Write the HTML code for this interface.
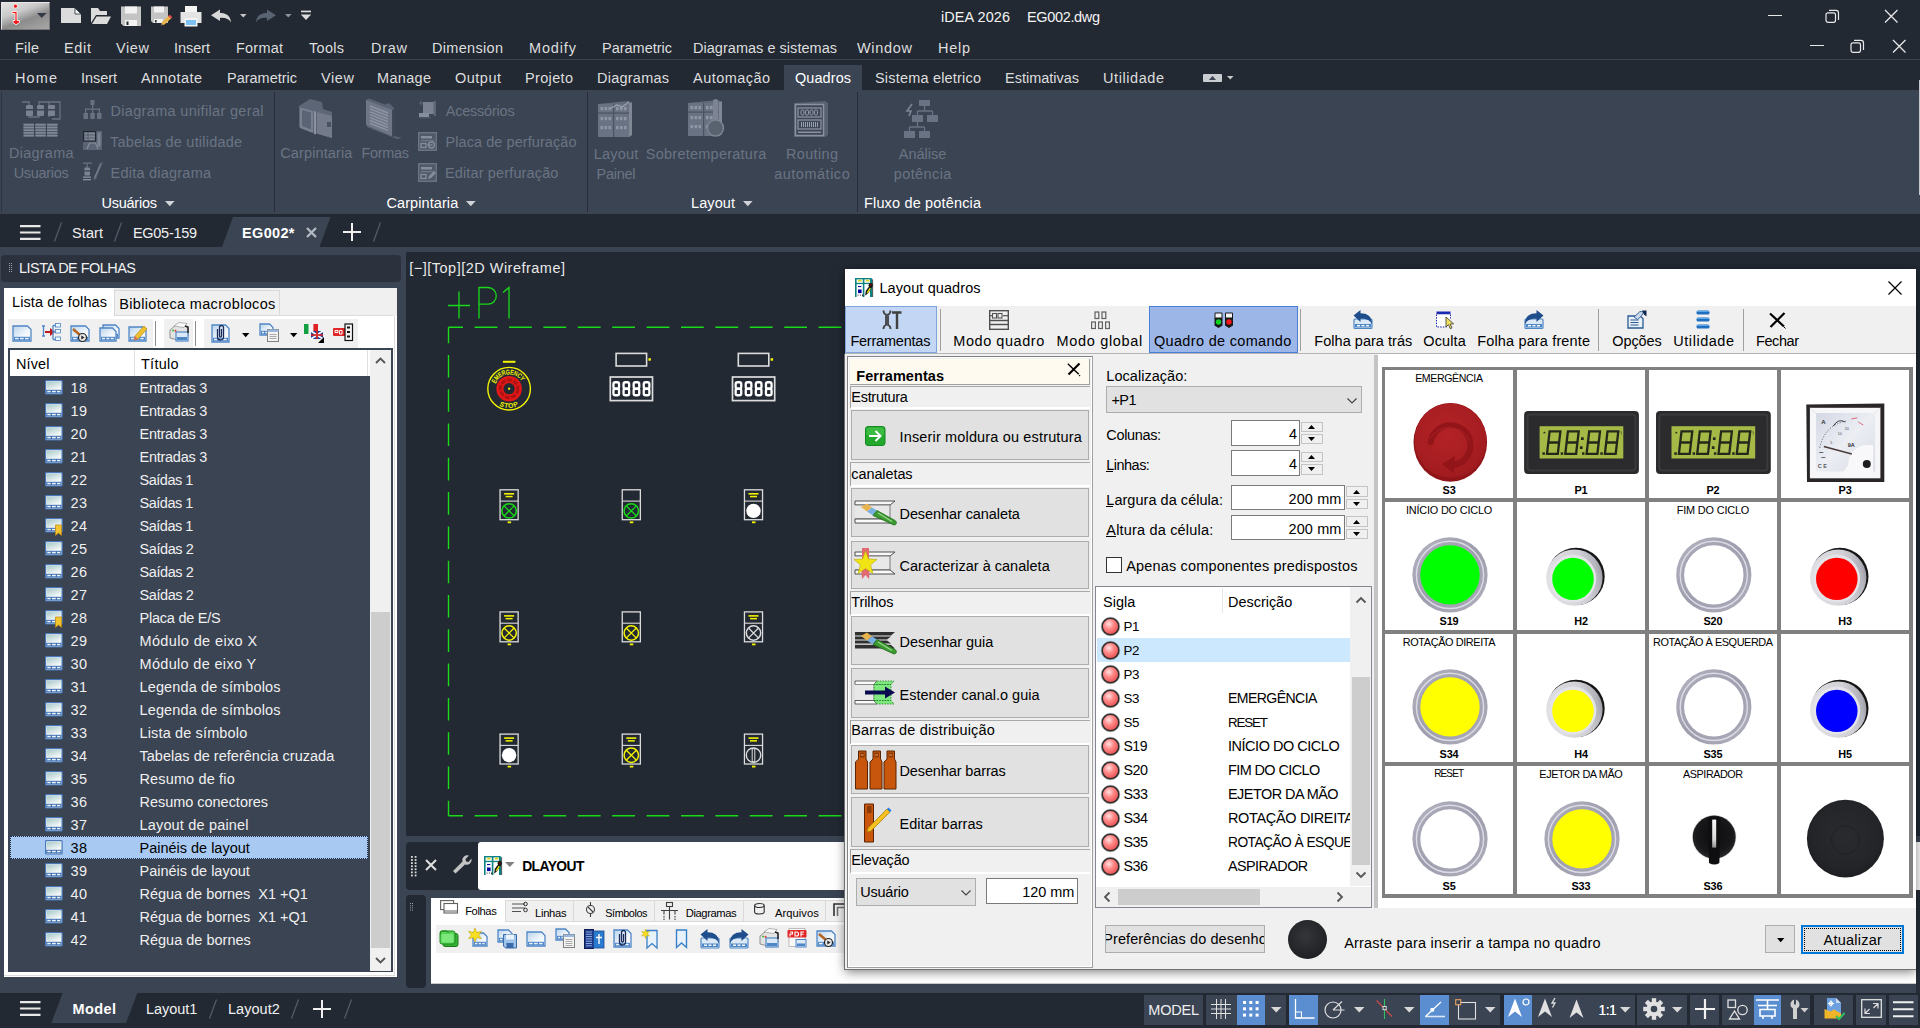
<!DOCTYPE html>
<html><head><meta charset="utf-8"><title>iDEA 2026 - EG002.dwg</title><style>html,body{margin:0;padding:0;}
body{width:1920px;height:1028px;overflow:hidden;background:#222933;position:relative;font-family:"Liberation Sans",sans-serif;}
.t{position:absolute;white-space:pre;margin:0;padding:0;}
.b{position:absolute;box-sizing:border-box;}
svg{overflow:visible;display:block;}
</style></head><body>
<div class="b" style="left:1px;top:2px;width:49px;height:28px;background:linear-gradient(160deg,#e4e4e4 0%,#c8c8c8 35%,#8c8c8c 60%,#a8a8a8 100%);border:1px solid #e8e8e8;border-right-color:#777;border-bottom-color:#777;box-sizing:border-box;"></div>
<svg class="b" style="left:8px;top:3px;" width="14" height="23" viewBox="0 0 14 23"><path d="M7.5 1.2a2 2 0 1 1 -0.1 0zM4 8.5h5v9h2.5v2l-3.5 2.3-3-2.3v-2h2v-7h-3z" fill="#f01818" stroke="#fff" stroke-width="0.8"/></svg>
<svg class="b" style="left:37px;top:13px;" width="10" height="6" viewBox="0 0 10 6"><path d="M0 0h9.5l-4.75 5z" fill="#333a46"/></svg>
<svg class="b" style="left:60px;top:7px;" width="22" height="17" viewBox="0 0 22 17"><path d="M1 1h14l6 6v9H1z" fill="#dcdcdc"/><path d="M15 1v6h6z" fill="#f4f4f4" stroke="#222933" stroke-width="0.8"/></svg>
<svg class="b" style="left:90px;top:7px;" width="22" height="18" viewBox="0 0 22 18"><path d="M1 16V1h7l2 3h7v4H6z" fill="#dcdcdc"/><path d="M6.5 9.5H21L17 17H2z" fill="#dcdcdc"/></svg>
<svg class="b" style="left:120px;top:6px;" width="22" height="21" viewBox="0 0 22 21"><path d="M1 0.5h20v19.5H3.5L1 17.5z" fill="#c4c4c4"/><rect x="5" y="0.5" width="12" height="7" fill="#f2f2f2"/><rect x="5" y="14" width="12" height="6" fill="#f2f2f2"/><rect x="6.5" y="15.5" width="2" height="3.5" fill="#222933"/></svg>
<svg class="b" style="left:150px;top:6px;" width="23" height="21" viewBox="0 0 23 21"><path d="M1 0.5h17v16.5H3L1 15z" fill="#c4c4c4"/><rect x="4" y="0.5" width="10" height="6" fill="#f2f2f2"/><rect x="4" y="13" width="9" height="4" fill="#f2f2f2"/><rect x="5" y="14" width="1.6" height="2.5" fill="#222933"/><path d="M11 19.5l1-3.5 7-6.5 2.5 2.5-7 6.5z" fill="#e8b54a"/><path d="M18.2 10.2l1.6-1.4 2.5 2.5-1.6 1.5z" fill="#e84c4c"/><path d="M11 19.5l0.6-2 1.4 1.4z" fill="#555"/></svg>
<svg class="b" style="left:180px;top:6px;" width="22" height="21" viewBox="0 0 22 21"><rect x="5" y="0" width="12" height="7" fill="#f4f4f4"/><path d="M0.5 6h21v11h-21z" fill="#e4e4e4"/><rect x="4.5" y="12" width="13" height="8.5" fill="#f4f4f4"/><rect x="6" y="14" width="10" height="5" fill="#7cc0f4"/></svg>
<svg class="b" style="left:210px;top:9px;" width="22" height="14" viewBox="0 0 22 14"><path d="M1 6.2L10 0.5v3.6c6 0 10.5 2.5 11 9.4c-2-3.6-5.5-5-11-4.6v3z" fill="#d8d8d8"/></svg>
<svg class="b" style="left:240px;top:14px;" width="7" height="4" viewBox="0 0 7 4"><path d="M0 0h6.6L3.3 3.6z" fill="#c8c8c8"/></svg>
<svg class="b" style="left:255px;top:9px;" width="22" height="14" viewBox="0 0 22 14"><path d="M21 6.2L12 0.5v3.6c-6 0-10.500 2.500-11 9.4c2-3.600 5.500-5 11-4.600v3z" fill="#596272"/></svg>
<svg class="b" style="left:285px;top:14px;" width="7" height="4" viewBox="0 0 7 4"><path d="M0 0h6.6L3.3 3.600z" fill="#8a93a0"/></svg>
<svg class="b" style="left:300px;top:10px;" width="12" height="11" viewBox="0 0 12 11"><rect x="1" y="0.6" width="10" height="1.700" fill="#dcdcdc"/><path d="M0.800 4.500h10.400L6 10z" fill="#dcdcdc"/></svg>
<div class="t" style="left:941.0px;top:6.8px;font-size:14.47px;line-height:21px;color:#f4f4f4;letter-spacing:0.078px;">iDEA 2026</div>
<div class="t" style="left:1027.0px;top:6.8px;font-size:14.47px;line-height:21px;color:#f4f4f4;letter-spacing:-0.327px;">EG002.dwg</div>
<div class="b" style="left:1768px;top:15px;width:14px;height:1.3px;background:#e8e8e8;"></div>
<svg class="b" style="left:1825px;top:9px;" width="15" height="15" viewBox="0 0 15 15"><rect x="1" y="3.800" width="9.500" height="9.500" rx="2" fill="none" stroke="#e8e8e8" stroke-width="1.200"/><path d="M4 1.400h7a2.500 2.500 0 0 1 2.500 2.500v7" fill="none" stroke="#e8e8e8" stroke-width="1.200"/></svg>
<svg class="b" style="left:1884px;top:9px;" width="15" height="15" viewBox="0 0 15 15"><path d="M1 1l12.500 12.500M13.500 1L1 13.500" stroke="#e8e8e8" stroke-width="1.300" fill="none"/></svg>
<div class="b" style="left:1810px;top:45px;width:14px;height:1.3px;background:#e8e8e8;"></div>
<svg class="b" style="left:1850px;top:39px;" width="15" height="15" viewBox="0 0 15 15"><rect x="1" y="3.800" width="9.500" height="9.500" rx="2" fill="none" stroke="#e8e8e8" stroke-width="1.200"/><path d="M4 1.400h7a2.500 2.500 0 0 1 2.500 2.500v7" fill="none" stroke="#e8e8e8" stroke-width="1.200"/></svg>
<svg class="b" style="left:1892px;top:39px;" width="15" height="15" viewBox="0 0 15 15"><path d="M1 1l12.500 12.500M13.500 1L1 13.500" stroke="#e8e8e8" stroke-width="1.300" fill="none"/></svg>
<div class="t" style="left:15.0px;top:37.8px;font-size:14.47px;line-height:21px;color:#dedede;letter-spacing:0.228px;">File</div>
<div class="t" style="left:64.0px;top:37.8px;font-size:14.47px;line-height:21px;color:#dedede;letter-spacing:0.689px;">Edit</div>
<div class="t" style="left:116.0px;top:37.8px;font-size:14.47px;line-height:21px;color:#dedede;letter-spacing:0.633px;">View</div>
<div class="t" style="left:174.0px;top:37.8px;font-size:14.47px;line-height:21px;color:#dedede;letter-spacing:-0.038px;">Insert</div>
<div class="t" style="left:236.0px;top:37.8px;font-size:14.47px;line-height:21px;color:#dedede;letter-spacing:0.235px;">Format</div>
<div class="t" style="left:309.0px;top:37.8px;font-size:14.47px;line-height:21px;color:#dedede;letter-spacing:0.305px;">Tools</div>
<div class="t" style="left:371.0px;top:37.8px;font-size:14.47px;line-height:21px;color:#dedede;letter-spacing:0.745px;">Draw</div>
<div class="t" style="left:432.0px;top:37.8px;font-size:14.47px;line-height:21px;color:#dedede;letter-spacing:0.330px;">Dimension</div>
<div class="t" style="left:529.0px;top:37.8px;font-size:14.47px;line-height:21px;color:#dedede;letter-spacing:0.876px;">Modify</div>
<div class="t" style="left:602.0px;top:37.8px;font-size:14.47px;line-height:21px;color:#dedede;letter-spacing:0.005px;">Parametric</div>
<div class="t" style="left:693.0px;top:37.8px;font-size:14.47px;line-height:21px;color:#dedede;letter-spacing:0.045px;">Diagramas e sistemas</div>
<div class="t" style="left:857.0px;top:37.8px;font-size:14.47px;line-height:21px;color:#dedede;letter-spacing:0.707px;">Window</div>
<div class="t" style="left:938.0px;top:37.8px;font-size:14.47px;line-height:21px;color:#dedede;letter-spacing:0.747px;">Help</div>
<div class="b" style="left:0px;top:59px;width:1920px;height:1px;background:#3b4453;"></div>
<div class="b" style="left:784px;top:65px;width:78px;height:25px;background:#3b4453;"></div>
<div class="t" style="left:15.0px;top:67.8px;font-size:14.47px;line-height:21px;color:#dedede;letter-spacing:1.134px;">Home</div>
<div class="t" style="left:81.0px;top:67.8px;font-size:14.47px;line-height:21px;color:#dedede;letter-spacing:-0.038px;">Insert</div>
<div class="t" style="left:141.0px;top:67.8px;font-size:14.47px;line-height:21px;color:#dedede;letter-spacing:0.439px;">Annotate</div>
<div class="t" style="left:227.0px;top:67.8px;font-size:14.47px;line-height:21px;color:#dedede;letter-spacing:0.005px;">Parametric</div>
<div class="t" style="left:321.0px;top:67.8px;font-size:14.47px;line-height:21px;color:#dedede;letter-spacing:0.633px;">View</div>
<div class="t" style="left:377.0px;top:67.8px;font-size:14.47px;line-height:21px;color:#dedede;letter-spacing:0.342px;">Manage</div>
<div class="t" style="left:455.0px;top:67.8px;font-size:14.47px;line-height:21px;color:#dedede;letter-spacing:0.512px;">Output</div>
<div class="t" style="left:525.0px;top:67.8px;font-size:14.47px;line-height:21px;color:#dedede;letter-spacing:0.359px;">Projeto</div>
<div class="t" style="left:597.0px;top:67.8px;font-size:14.47px;line-height:21px;color:#dedede;letter-spacing:0.255px;">Diagramas</div>
<div class="t" style="left:693.0px;top:67.8px;font-size:14.47px;line-height:21px;color:#dedede;letter-spacing:0.475px;">Automação</div>
<div class="t" style="left:795.0px;top:67.8px;font-size:14.47px;line-height:21px;color:#ffffff;letter-spacing:0.084px;">Quadros</div>
<div class="t" style="left:875.0px;top:67.8px;font-size:14.47px;line-height:21px;color:#dedede;letter-spacing:0.204px;">Sistema eletrico</div>
<div class="t" style="left:1005.0px;top:67.8px;font-size:14.47px;line-height:21px;color:#dedede;letter-spacing:0.002px;">Estimativas</div>
<div class="t" style="left:1103.0px;top:67.8px;font-size:14.47px;line-height:21px;color:#dedede;letter-spacing:0.587px;">Utilidade</div>
<div class="b" style="left:1203px;top:74px;width:19px;height:8px;background:#c9ccd1;border-radius:1px;"></div>
<svg class="b" style="left:1209px;top:76px;" width="7" height="4" viewBox="0 0 7 4"><path d="M0 4h7L3.500 0z" fill="#3b4453"/></svg>
<svg class="b" style="left:1227px;top:76px;" width="7" height="4" viewBox="0 0 7 4"><path d="M0 0h6.600L3.300 3.600z" fill="#c8c8c8"/></svg>
<div class="b" style="left:0px;top:90px;width:1920px;height:124px;background:#3b4453;"></div>
<div class="b" style="left:274px;top:92px;width:1px;height:120px;background:#272e39;"></div>
<div class="b" style="left:587px;top:92px;width:1px;height:120px;background:#272e39;"></div>
<div class="b" style="left:857px;top:92px;width:1px;height:120px;background:#272e39;"></div>
<div class="b" style="left:1px;top:92px;width:1px;height:120px;background:#2c3440;"></div>
<div class="b" style="left:1918.5px;top:80px;width:1.2px;height:115px;background:#c4c8ce;"></div>
<svg class="b" style="left:22px;top:100px;" width="39" height="38" viewBox="0 0 39 38"><g fill="none" stroke="#697181" stroke-width="1.3"><path d="M0 2h7v15h10V2h10v15M20 2h18v17h-8"/></g><rect x="4" y="5" width="7" height="11" rx="1.200" fill="#7a8291"/><rect x="4" y="9" width="7" height="1.500" fill="#3b4453"/><rect x="15" y="5" width="7" height="11" rx="1.200" fill="#7a8291"/><rect x="15" y="9" width="7" height="1.500" fill="#3b4453"/><rect x="26" y="5" width="7" height="11" rx="1.200" fill="#7a8291"/><rect x="26" y="9" width="7" height="1.500" fill="#3b4453"/><rect x="1.5" y="23" width="10.500" height="14" fill="#515a69"/><rect x="1.5" y="24.0" width="10.500" height="1.600" fill="#828a98"/><rect x="1.5" y="26.7" width="10.500" height="1.600" fill="#828a98"/><rect x="1.5" y="29.4" width="10.500" height="1.600" fill="#828a98"/><rect x="1.5" y="32.1" width="10.500" height="1.600" fill="#828a98"/><rect x="1.5" y="34.8" width="10.500" height="1.600" fill="#828a98"/><rect x="13.3" y="23" width="10.500" height="14" fill="#515a69"/><rect x="13.3" y="24.0" width="10.500" height="1.600" fill="#828a98"/><rect x="13.3" y="26.7" width="10.500" height="1.600" fill="#828a98"/><rect x="13.3" y="29.4" width="10.500" height="1.600" fill="#828a98"/><rect x="13.3" y="32.1" width="10.500" height="1.600" fill="#828a98"/><rect x="13.3" y="34.8" width="10.500" height="1.600" fill="#828a98"/><rect x="25.0" y="23" width="10.500" height="14" fill="#515a69"/><rect x="25.0" y="24.0" width="10.500" height="1.600" fill="#828a98"/><rect x="25.0" y="26.7" width="10.500" height="1.600" fill="#828a98"/><rect x="25.0" y="29.4" width="10.500" height="1.600" fill="#828a98"/><rect x="25.0" y="32.1" width="10.500" height="1.600" fill="#828a98"/><rect x="25.0" y="34.8" width="10.500" height="1.600" fill="#828a98"/></svg>
<div class="t" style="left:9.0px;top:143.3px;font-size:14.47px;line-height:21px;color:#6a7484;letter-spacing:0.253px;">Diagrama</div>
<div class="t" style="left:13.7px;top:162.8px;font-size:14.47px;line-height:21px;color:#6a7484;letter-spacing:-0.299px;">Usuarios</div>
<svg class="b" style="left:83px;top:100px;" width="19" height="20" viewBox="0 0 19 20"><g fill="#697181"><rect x="7.500" y="0" width="4" height="5"/><rect x="9" y="5" width="1.300" height="4"/><rect x="2" y="8.500" width="15" height="1.300"/><rect x="2" y="8.500" width="1.300" height="5"/><rect x="9" y="8.500" width="1.300" height="5"/><rect x="15.700" y="8.500" width="1.300" height="5"/><rect x="0.500" y="13" width="4.500" height="6"/><rect x="7.300" y="13" width="4.500" height="6"/><rect x="14" y="13" width="4.500" height="6"/></g></svg>
<svg class="b" style="left:83px;top:131px;" width="20" height="20" viewBox="0 0 20 20"><rect x="0" y="0" width="19" height="19" fill="#5b6474"/><rect x="0.600" y="0.600" width="12" height="9.500" fill="#7d8594" stroke="#20262f" stroke-width="1.200"/><path d="M1 4h11M1 7h11M5 1v9" stroke="#4c5563" stroke-width="0.800"/><path d="M4 18l2.500-6h6l2.500 6" stroke="#868e9c" stroke-width="1.200" fill="none"/><rect x="14.500" y="1.500" width="3" height="14" fill="#7d8594"/></svg>
<svg class="b" style="left:83px;top:162px;" width="20" height="20" viewBox="0 0 20 20"><g fill="#697181"><rect x="0" y="0.500" width="9" height="1.300"/><rect x="3.500" y="1" width="1.300" height="5"/><rect x="1.500" y="5.500" width="5.500" height="8" rx="0.800" fill="#7d8594"/><rect x="1.500" y="8.300" width="5.500" height="1.300" fill="#3b4453"/><rect x="0" y="14.500" width="8" height="1.300" fill="#8a92a0"/><rect x="0" y="17" width="8" height="1.300" fill="#8a92a0"/></g><path d="M10 17.500l7.500-17h2.300l-7 17z" fill="#5c6575"/><path d="M11.500 16l6-14" stroke="#8a92a0" stroke-width="0.700"/></svg>
<div class="t" style="left:110.5px;top:100.8px;font-size:14.47px;line-height:21px;color:#6a7484;letter-spacing:0.338px;">Diagrama unifilar geral</div>
<div class="t" style="left:110.0px;top:132.3px;font-size:14.47px;line-height:21px;color:#6a7484;letter-spacing:0.215px;">Tabelas de utilidade</div>
<div class="t" style="left:110.5px;top:163.3px;font-size:14.47px;line-height:21px;color:#6a7484;letter-spacing:0.244px;">Edita diagrama</div>
<div class="t" style="left:101.5px;top:192.8px;font-size:14.47px;line-height:21px;color:#ffffff;letter-spacing:-0.228px;">Usuários</div>
<svg class="b" style="left:165px;top:201px;" width="10" height="6" viewBox="0 0 10 6"><path d="M0 0h9.600L4.800 5.200z" fill="#d0d3d8"/></svg>
<svg class="b" style="left:297px;top:98px;" width="38" height="41" viewBox="0 0 38 41"><path d="M2 8l11-7 12 3 1 7 9 3v26l-18-5-15-6z" fill="#5d6676"/><path d="M3 9.500l13 3.500v22l-13-5z" fill="#798190"/><path d="M5 12l9 2.500v17l-9-3.500z" fill="#5b6474"/><path d="M20 14l15 4v22l-15-4.500z" fill="#737b8a"/><path d="M17 13l2 0.500v23l-2-0.500z" fill="#8a92a0"/><rect x="30" y="24" width="4" height="5" fill="#4a5362"/></svg>
<svg class="b" style="left:365px;top:98px;" width="40" height="41" viewBox="0 0 40 41"><path d="M1 2l3-1.500 16 6 4-1.500 5 5v28l8 2-5 1-30-12z" fill="#5a6373"/><path d="M1 2l26 10v26l-26-11z" fill="#6f7787"/><path d="M27 12l3-1v27l-3 1z" fill="#3e4756"/><path d="M5 8.0l18 7" stroke="#8d95a3" stroke-width="1.400"/><path d="M5 10.9l18 7" stroke="#8d95a3" stroke-width="1.400"/><path d="M5 13.8l18 7" stroke="#8d95a3" stroke-width="1.400"/><path d="M5 16.7l18 7" stroke="#8d95a3" stroke-width="1.400"/><path d="M5 19.6l18 7" stroke="#8d95a3" stroke-width="1.400"/><path d="M5 22.5l18 7" stroke="#8d95a3" stroke-width="1.400"/><path d="M5 25.4l18 7" stroke="#8d95a3" stroke-width="1.400"/></svg>
<div class="t" style="left:280.3px;top:143.3px;font-size:14.47px;line-height:21px;color:#6a7484;letter-spacing:0.123px;">Carpintaria</div>
<div class="t" style="left:361.5px;top:143.3px;font-size:14.47px;line-height:21px;color:#6a7484;letter-spacing:-0.308px;">Formas</div>
<svg class="b" style="left:418px;top:100px;" width="19" height="20" viewBox="0 0 19 20"><rect x="5" y="2" width="11" height="12" fill="#7a8291"/><rect x="15.500" y="1" width="2.500" height="15" fill="#5d6676"/><rect x="1" y="13" width="10" height="4.500" fill="#868e9c"/><rect x="1" y="17" width="12" height="1.500" fill="#4c5563"/><path d="M3 1v4M1 3h4" stroke="#5d6676" stroke-width="1"/></svg>
<svg class="b" style="left:418px;top:132px;" width="19" height="19" viewBox="0 0 19 19"><rect x="0.700" y="0.700" width="17.600" height="17.600" fill="#515a69" stroke="#6f7787" stroke-width="1.300"/><rect x="3" y="4" width="11" height="2.500" fill="#868e9c"/><rect x="3" y="8" width="13" height="1.300" fill="#6f7787"/><rect x="3" y="11.500" width="5" height="4" fill="none" stroke="#868e9c" stroke-width="1.300"/><circle cx="13.500" cy="13" r="3" fill="none" stroke="#868e9c" stroke-width="1.300"/><path d="M9.500 13h5" stroke="#868e9c" stroke-width="1.300"/></svg>
<svg class="b" style="left:418px;top:163px;" width="19" height="19" viewBox="0 0 19 19"><rect x="0.700" y="0.700" width="17.600" height="17.600" fill="#515a69" stroke="#6f7787" stroke-width="1.300"/><rect x="3" y="4" width="11" height="2.500" fill="#868e9c"/><rect x="3" y="8" width="13" height="1.300" fill="#6f7787"/><rect x="3" y="11.500" width="5" height="4" fill="none" stroke="#868e9c" stroke-width="1.300"/><path d="M10 16l1-3 5-5 2 2-5 5z" fill="#868e9c"/></svg>
<div class="t" style="left:445.7px;top:100.8px;font-size:14.47px;line-height:21px;color:#6a7484;letter-spacing:-0.196px;">Acessórios</div>
<div class="t" style="left:445.5px;top:131.8px;font-size:14.47px;line-height:21px;color:#6a7484;letter-spacing:0.083px;">Placa de perfuração</div>
<div class="t" style="left:445.0px;top:163.3px;font-size:14.47px;line-height:21px;color:#6a7484;letter-spacing:0.150px;">Editar perfuração</div>
<div class="t" style="left:386.5px;top:192.8px;font-size:14.47px;line-height:21px;color:#ffffff;letter-spacing:0.093px;">Carpintaria</div>
<svg class="b" style="left:466px;top:201px;" width="10" height="6" viewBox="0 0 10 6"><path d="M0 0h9.600L4.800 5.200z" fill="#d0d3d8"/></svg>
<svg class="b" style="left:597px;top:100px;" width="37" height="39" viewBox="0 0 37 39"><path d="M1 4l30-3 4 2v32l-3 2H1z" fill="#626b7b"/><path d="M32 3l3-0.500v32.500l-3 2z" fill="#808896"/><rect x="1" y="4" width="31" height="33" fill="#6a7383"/><rect x="1" y="12.500" width="31" height="1.200" fill="#4a5362"/><rect x="16" y="4" width="1.200" height="33" fill="#4a5362"/><rect x="3.5" y="7" width="2.600" height="3.200" fill="#8f97a5"/><rect x="7.5" y="7" width="2.600" height="3.200" fill="#8f97a5"/><rect x="11.5" y="7" width="2.600" height="3.200" fill="#8f97a5"/><rect x="19.0" y="7" width="2.600" height="3.200" fill="#8f97a5"/><rect x="23.0" y="7" width="2.600" height="3.200" fill="#8f97a5"/><rect x="27.0" y="7" width="2.600" height="3.200" fill="#8f97a5"/><rect x="3.5" y="17" width="2.600" height="3.200" fill="#8f97a5"/><rect x="7.5" y="17" width="2.600" height="3.200" fill="#8f97a5"/><rect x="11.5" y="17" width="2.600" height="3.200" fill="#8f97a5"/><rect x="19.0" y="17" width="2.600" height="3.200" fill="#8f97a5"/><rect x="23.0" y="17" width="2.600" height="3.200" fill="#8f97a5"/><rect x="27.0" y="17" width="2.600" height="3.200" fill="#8f97a5"/><rect x="3.5" y="26" width="2.600" height="3.200" fill="#8f97a5"/><rect x="7.5" y="26" width="2.600" height="3.200" fill="#8f97a5"/><rect x="11.5" y="26" width="2.600" height="3.200" fill="#8f97a5"/><rect x="19.0" y="26" width="2.600" height="3.200" fill="#8f97a5"/><rect x="23.0" y="26" width="2.600" height="3.200" fill="#8f97a5"/><rect x="27.0" y="26" width="2.600" height="3.200" fill="#8f97a5"/><path d="M14 8l6-3 5 2 7-5" stroke="#9aa1ae" stroke-width="1.300" fill="none"/></svg>
<svg class="b" style="left:687px;top:99px;" width="41" height="40" viewBox="0 0 41 40"><path d="M1 4l30-3 4 2v32l-3 2H1z" fill="#626b7b"/><path d="M32 3l3-0.500v32.500l-3 2z" fill="#808896"/><rect x="1" y="4" width="31" height="33" fill="#6a7383"/><rect x="1" y="12.500" width="31" height="1.200" fill="#4a5362"/><rect x="16" y="4" width="1.200" height="33" fill="#4a5362"/><rect x="3.5" y="7" width="2.600" height="3.200" fill="#8f97a5"/><rect x="7.5" y="7" width="2.600" height="3.200" fill="#8f97a5"/><rect x="11.5" y="7" width="2.600" height="3.200" fill="#8f97a5"/><rect x="19.0" y="7" width="2.600" height="3.200" fill="#8f97a5"/><rect x="23.0" y="7" width="2.600" height="3.200" fill="#8f97a5"/><rect x="27.0" y="7" width="2.600" height="3.200" fill="#8f97a5"/><rect x="3.5" y="17" width="2.600" height="3.200" fill="#8f97a5"/><rect x="7.5" y="17" width="2.600" height="3.200" fill="#8f97a5"/><rect x="11.5" y="17" width="2.600" height="3.200" fill="#8f97a5"/><rect x="19.0" y="17" width="2.600" height="3.200" fill="#8f97a5"/><rect x="23.0" y="17" width="2.600" height="3.200" fill="#8f97a5"/><rect x="27.0" y="17" width="2.600" height="3.200" fill="#8f97a5"/><rect x="3.5" y="26" width="2.600" height="3.200" fill="#8f97a5"/><rect x="7.5" y="26" width="2.600" height="3.200" fill="#8f97a5"/><rect x="11.5" y="26" width="2.600" height="3.200" fill="#8f97a5"/><rect x="19.0" y="26" width="2.600" height="3.200" fill="#8f97a5"/><rect x="23.0" y="26" width="2.600" height="3.200" fill="#8f97a5"/><rect x="27.0" y="26" width="2.600" height="3.200" fill="#8f97a5"/><rect x="26" y="0" width="5" height="25" rx="2.500" fill="#7d8594"/><circle cx="28.500" cy="29" r="8" fill="#59626f"/><circle cx="28.500" cy="29" r="8" fill="none" stroke="#7d8594" stroke-width="1.500"/></svg>
<svg class="b" style="left:793px;top:100px;" width="37" height="39" viewBox="0 0 37 39"><path d="M1 3l31-2 3 2v32l-3 2H1z" fill="#596272"/><rect x="2.500" y="4.500" width="28" height="31" fill="#3e4756" stroke="#8a92a0" stroke-width="1.500"/><rect x="5" y="8" width="23" height="9" fill="none" stroke="#8a92a0" stroke-width="1.300"/><rect x="5" y="20" width="23" height="9" fill="none" stroke="#8a92a0" stroke-width="1.300"/><rect x="8.0" y="10" width="3" height="5" rx="1.300" fill="none" stroke="#9aa1ae" stroke-width="1"/><rect x="12.5" y="10" width="3" height="5" rx="1.300" fill="none" stroke="#9aa1ae" stroke-width="1"/><rect x="17.0" y="10" width="3" height="5" rx="1.300" fill="none" stroke="#9aa1ae" stroke-width="1"/><rect x="21.5" y="10" width="3" height="5" rx="1.300" fill="none" stroke="#9aa1ae" stroke-width="1"/><rect x="8" y="22" width="1" height="5" fill="#9aa1ae"/><rect x="10" y="22" width="1" height="5" fill="#9aa1ae"/><rect x="12" y="22" width="1" height="5" fill="#9aa1ae"/><rect x="14" y="22" width="1" height="5" fill="#9aa1ae"/><rect x="16" y="22" width="1" height="5" fill="#9aa1ae"/><rect x="18" y="22" width="1" height="5" fill="#9aa1ae"/><rect x="20" y="22" width="1" height="5" fill="#9aa1ae"/><rect x="22" y="22" width="1" height="5" fill="#9aa1ae"/><rect x="24" y="22" width="1" height="5" fill="#9aa1ae"/><rect x="5" y="31.500" width="23" height="1.500" fill="#8a92a0"/></svg>
<div class="t" style="left:593.8px;top:144.3px;font-size:14.47px;line-height:21px;color:#6a7484;letter-spacing:0.211px;">Layout</div>
<div class="t" style="left:596.5px;top:164.3px;font-size:14.47px;line-height:21px;color:#6a7484;letter-spacing:-0.245px;">Painel</div>
<div class="t" style="left:645.8px;top:144.3px;font-size:14.47px;line-height:21px;color:#6a7484;letter-spacing:0.258px;">Sobretemperatura</div>
<div class="t" style="left:786.0px;top:144.3px;font-size:14.47px;line-height:21px;color:#6a7484;letter-spacing:0.354px;">Routing</div>
<div class="t" style="left:774.2px;top:164.3px;font-size:14.47px;line-height:21px;color:#6a7484;letter-spacing:0.524px;">automático</div>
<div class="t" style="left:691.0px;top:192.8px;font-size:14.47px;line-height:21px;color:#ffffff;letter-spacing:0.111px;">Layout</div>
<svg class="b" style="left:743px;top:201px;" width="10" height="6" viewBox="0 0 10 6"><path d="M0 0h9.600L4.800 5.200z" fill="#d0d3d8"/></svg>
<svg class="b" style="left:904px;top:100px;" width="36" height="39" viewBox="0 0 36 39"><g fill="#6a7383"><rect x="15" y="0" width="11" height="6"/><rect x="8" y="15" width="11" height="7"/><rect x="23" y="15" width="11" height="7"/><rect x="0" y="31" width="11" height="7"/><rect x="15" y="31" width="11" height="7"/></g><path d="M20.500 6v5M13.500 11h15M13.500 11v4M28.500 11v4M13.500 22v5M5.500 27h15M5.500 27v4M20.500 27v4" stroke="#6a7383" stroke-width="1.300" fill="none"/><path d="M8 4l-5 7h4l-2 5" stroke="#7d8594" stroke-width="1.600" fill="none"/></svg>
<div class="t" style="left:898.8px;top:144.3px;font-size:14.47px;line-height:21px;color:#6a7484;letter-spacing:0.007px;">Análise</div>
<div class="t" style="left:893.8px;top:164.3px;font-size:14.47px;line-height:21px;color:#6a7484;letter-spacing:0.399px;">potência</div>
<div class="t" style="left:864.0px;top:192.8px;font-size:14.47px;line-height:21px;color:#ffffff;letter-spacing:0.173px;">Fluxo de potência</div>
<svg class="b" style="left:20px;top:225px;" width="21" height="15" viewBox="0 0 21 15"><path d="M0 1.200h20.500M0 7.500h20.500M0 13.800h20.500" stroke="#e8e8e8" stroke-width="2.200"/></svg>
<svg class="b" style="left:53px;top:222px;" width="10" height="20" viewBox="0 0 10 20"><path d="M8.500 0.500L1.500 19.5" stroke="#555e6d" stroke-width="1.200"/></svg>
<div class="t" style="left:72.0px;top:222.8px;font-size:14.47px;line-height:21px;color:#f0f0f0;letter-spacing:0.111px;">Start</div>
<svg class="b" style="left:113px;top:222px;" width="10" height="20" viewBox="0 0 10 20"><path d="M8.500 0.500L1.500 19.5" stroke="#555e6d" stroke-width="1.200"/></svg>
<div class="t" style="left:133.0px;top:222.8px;font-size:14.47px;line-height:21px;color:#f0f0f0;letter-spacing:-0.280px;">EG05-159</div>
<svg class="b" style="left:218px;top:217px;" width="116" height="30" viewBox="0 0 116 30"><path d="M4 30L15 0H112.500L101.500 30z" fill="#3b4453"/></svg>
<div class="t" style="left:242.0px;top:222.8px;font-size:14.47px;line-height:21px;color:#ffffff;letter-spacing:0.364px;font-weight:bold;">EG002*</div>
<svg class="b" style="left:306px;top:227px;" width="11" height="11" viewBox="0 0 11 11"><path d="M1 1l9 9M10 1l-9 9" stroke="#b4b9c2" stroke-width="2.300"/></svg>
<svg class="b" style="left:343px;top:223px;" width="18" height="18" viewBox="0 0 18 18"><path d="M9 0v18M0 9h18" stroke="#f0f0f0" stroke-width="2"/></svg>
<svg class="b" style="left:372px;top:222px;" width="10" height="20" viewBox="0 0 10 20"><path d="M8.500 0.500L1.500 19.5" stroke="#555e6d" stroke-width="1.200"/></svg>
<div class="b" style="left:0px;top:247px;width:1920px;height:5px;background:#3b4453;"></div>
<svg width="0" height="0" style="position:absolute"><defs><linearGradient id="shg" x1="0" y1="0" x2="0.700" y2="1"><stop offset="0" stop-color="#a8c8c8"/><stop offset="1" stop-color="#f4f8f8"/></linearGradient></defs></svg>
<div class="b" style="left:0px;top:247px;width:1920px;height:746px;background:#3b4453;"></div>
<div class="b" style="left:1px;top:255px;width:400px;height:27.2px;background:#2b323e;border-radius:4px;"></div>
<svg class="b" style="left:9px;top:263px;" width="3" height="10" viewBox="0 0 3 10"><rect x="0" y="0.0" width="1" height="1" fill="#9aa1ad"/><rect x="2" y="0.0" width="1" height="1" fill="#9aa1ad"/><rect x="0" y="2.0" width="1" height="1" fill="#9aa1ad"/><rect x="2" y="2.0" width="1" height="1" fill="#9aa1ad"/><rect x="0" y="4.0" width="1" height="1" fill="#9aa1ad"/><rect x="2" y="4.0" width="1" height="1" fill="#9aa1ad"/><rect x="0" y="6.0" width="1" height="1" fill="#9aa1ad"/><rect x="2" y="6.0" width="1" height="1" fill="#9aa1ad"/><rect x="0" y="8.0" width="1" height="1" fill="#9aa1ad"/><rect x="2" y="8.0" width="1" height="1" fill="#9aa1ad"/></svg>
<div class="t" style="left:19.0px;top:257.6px;font-size:14.47px;line-height:21px;color:#f0f0f0;letter-spacing:-0.527px;">LISTA DE FOLHAS</div>
<div class="b" style="left:4px;top:287.8px;width:393.2px;height:689.3px;background:#ffffff;"></div>
<div class="b" style="left:114px;top:287.8px;width:283.2px;height:28px;background:#f0f0f0;"></div>
<div class="b" style="left:394.2px;top:316px;width:1px;height:660px;background:#dcdcdc;"></div>
<div class="b" style="left:4px;top:975px;width:391px;height:1px;background:#dcdcdc;"></div>
<div class="b" style="left:114px;top:315px;width:279px;height:1px;background:#dcdcdc;"></div>
<div class="b" style="left:4px;top:288px;width:110px;height:28px;background:#ffffff;"></div>
<div class="b" style="left:114px;top:290px;width:166px;height:26px;background:#f0f0f0;border:1px solid #d9d9d9;"></div>
<div class="b" style="left:8px;top:316px;width:385px;height:32px;background:#ffffff;"></div>
<div class="t" style="left:12.0px;top:292.3px;font-size:14.47px;line-height:21px;color:#000;letter-spacing:0.120px;">Lista de folhas</div>
<div class="t" style="left:119.3px;top:293.8px;font-size:14.47px;line-height:21px;color:#000;letter-spacing:0.343px;">Biblioteca macroblocos</div>
<div class="b" style="left:8px;top:319px;width:145px;height:29px;background:#f0f0f0;"></div>
<div class="b" style="left:164px;top:319px;width:29px;height:29px;background:#f0f0f0;"></div>
<div class="b" style="left:204px;top:319px;width:154px;height:29px;background:#f0f0f0;"></div>
<div class="b" style="left:155px;top:321px;width:1px;height:25px;background:#8c8c8c;"></div>
<div class="b" style="left:195px;top:321px;width:1px;height:25px;background:#8c8c8c;"></div>
<svg width="0" height="0" style="position:absolute"><defs><linearGradient id="shg2" x1="0" y1="0" x2="1" y2="1"><stop offset="0" stop-color="#b9d3ec"/><stop offset="0.600" stop-color="#f2f7fc"/><stop offset="1" stop-color="#ffffff"/></linearGradient><radialGradient id="redled" cx="0.400" cy="0.350" r="0.650"><stop offset="0" stop-color="#ffe0e0"/><stop offset="0.450" stop-color="#ff8a8a"/><stop offset="1" stop-color="#e85050"/></radialGradient></defs></svg>
<svg class="b" style="left:12px;top:325px;" width="20" height="17" viewBox="0 0 20 17"><path d="M1 1H15.5L19.0 4.500V16.0H1z" fill="url(#shg2)" stroke="#4f86c6" stroke-width="1.300"/><rect x="2" y="11.8" width="16.0" height="3.500" fill="#4f86c6"/><rect x="3.0" y="12.8" width="3.7" height="1.500" fill="#e8f0fa"/><rect x="8.0" y="12.8" width="3.7" height="1.500" fill="#e8f0fa"/><rect x="13.0" y="12.8" width="3.7" height="1.500" fill="#e8f0fa"/></svg>
<svg class="b" style="left:41px;top:323px;" width="20" height="20" viewBox="0 0 20 20"><path d="M1 3h3M1 13h3M2.500 3v10" stroke="#4f86c6" stroke-width="1.300" fill="none"/><path d="M4 8h5V5l5 4-5 4v-3H4z" fill="#c01818"/><path d="M12 2.500v14M12 2.500h7M12 8.500h7M12 16.500h7" stroke="#4f86c6" stroke-width="1.300" fill="none"/><rect x="14.500" y="0.500" width="5" height="3.500" fill="#f2f7fc" stroke="#4f86c6" stroke-width="0.800"/><rect x="14.500" y="6.500" width="5" height="3.500" fill="#f2f7fc" stroke="#4f86c6" stroke-width="0.800"/><rect x="14.500" y="14" width="5" height="3.500" fill="#f2f7fc" stroke="#4f86c6" stroke-width="0.800"/></svg>
<svg class="b" style="left:70px;top:325px;" width="20" height="17" viewBox="0 0 20 17"><path d="M1 1H15.5L19.0 4.500V16.0H1z" fill="url(#shg2)" stroke="#4f86c6" stroke-width="1.300"/><rect x="2" y="11.8" width="16.0" height="3.500" fill="#4f86c6"/><rect x="3.0" y="12.8" width="3.7" height="1.500" fill="#e8f0fa"/><rect x="8.0" y="12.8" width="3.7" height="1.500" fill="#e8f0fa"/><rect x="13.0" y="12.8" width="3.7" height="1.500" fill="#e8f0fa"/><path d="M3 4l7 6" stroke="#b5651d" stroke-width="2.500"/><circle cx="12.500" cy="12.500" r="4" fill="#e8e8e8" stroke="#222" stroke-width="1.200"/><path d="M11.300 10.500v4l3.200-2z" fill="#222"/></svg>
<svg class="b" style="left:102px;top:324px;" width="18" height="15" viewBox="0 0 18 15"><path d="M1 1H13.5L17.0 4.500V14.0H1z" fill="url(#shg2)" stroke="#4f86c6" stroke-width="1.300"/><rect x="2" y="9.8" width="14.0" height="3.500" fill="#4f86c6"/><rect x="3.0" y="10.8" width="3.0" height="1.500" fill="#e8f0fa"/><rect x="7.3" y="10.8" width="3.0" height="1.500" fill="#e8f0fa"/><rect x="11.7" y="10.8" width="3.0" height="1.500" fill="#e8f0fa"/></svg>
<svg class="b" style="left:99px;top:327px;" width="18" height="15" viewBox="0 0 18 15"><path d="M1 1H13.5L17.0 4.500V14.0H1z" fill="url(#shg2)" stroke="#4f86c6" stroke-width="1.300"/><rect x="2" y="9.8" width="14.0" height="3.500" fill="#4f86c6"/><rect x="3.0" y="10.8" width="3.0" height="1.500" fill="#e8f0fa"/><rect x="7.3" y="10.8" width="3.0" height="1.500" fill="#e8f0fa"/><rect x="11.7" y="10.8" width="3.0" height="1.500" fill="#e8f0fa"/></svg>
<svg class="b" style="left:128px;top:326px;" width="19" height="16" viewBox="0 0 19 16"><path d="M1 1H14.5L18.0 4.500V15.0H1z" fill="url(#shg2)" stroke="#4f86c6" stroke-width="1.300"/><rect x="2" y="10.8" width="15.0" height="3.500" fill="#4f86c6"/><rect x="3.0" y="11.8" width="3.4" height="1.500" fill="#e8f0fa"/><rect x="7.7" y="11.8" width="3.4" height="1.500" fill="#e8f0fa"/><rect x="12.3" y="11.8" width="3.4" height="1.500" fill="#e8f0fa"/><path d="M6 14l1-4 9-10 3 3-9 10z" fill="#f0c030" stroke="#a07800" stroke-width="0.600"/><path d="M6 14l1-4 3 3z" fill="#e06a6a"/></svg>
<svg class="b" style="left:168px;top:322px;" width="21" height="21" viewBox="0 0 21 21"><path d="M2 8l6-5 10 1 2 3v7l-6 5-12-3z" fill="#e4e4e4" stroke="#7a7a7a" stroke-width="0.800"/><path d="M6 4l5-3.500 8 1-3 4z" fill="#fafafa" stroke="#888" stroke-width="0.600"/><rect x="8" y="10" width="12" height="9" fill="#dbe8f6" stroke="#4f86c6" stroke-width="1.200"/><rect x="9" y="15" width="10" height="3" fill="#4f86c6"/><circle cx="5" cy="8.500" r="1" fill="#30c030"/><circle cx="7.500" cy="8.800" r="1" fill="#e03030"/><path d="M17 4l3 1v6" stroke="#222" stroke-width="1.500" fill="none"/></svg>
<svg class="b" style="left:211px;top:324px;" width="19" height="19" viewBox="0 0 19 19"><path d="M1 1H14.5L18.0 4.500V18.0H1z" fill="url(#shg2)" stroke="#4f86c6" stroke-width="1.300"/><rect x="2" y="13.8" width="15.0" height="3.500" fill="#4f86c6"/><rect x="3.0" y="14.8" width="3.4" height="1.500" fill="#e8f0fa"/><rect x="7.7" y="14.8" width="3.4" height="1.500" fill="#e8f0fa"/><rect x="12.3" y="14.8" width="3.4" height="1.500" fill="#e8f0fa"/><path d="M6.500 5v8a3 3 0 0 0 6 0V3.500a2 2 0 0 0-4 0V12a1 1 0 0 0 2 0V5" stroke="#1a2a5a" stroke-width="1.300" fill="none"/></svg>
<svg class="b" style="left:242px;top:333px;" width="8" height="5" viewBox="0 0 8 5"><path d="M0 0h7.400L3.700 4.200z" fill="#000"/></svg>
<svg class="b" style="left:259px;top:323px;" width="15" height="13" viewBox="0 0 15 13"><path d="M1 1H10.5L14.0 4.500V12.0H1z" fill="url(#shg2)" stroke="#4f86c6" stroke-width="1.300"/><rect x="2" y="7.8" width="11.0" height="3.500" fill="#4f86c6"/><rect x="3.0" y="8.8" width="2.0" height="1.500" fill="#e8f0fa"/><rect x="6.3" y="8.8" width="2.0" height="1.500" fill="#e8f0fa"/><rect x="9.7" y="8.8" width="2.0" height="1.500" fill="#e8f0fa"/></svg>
<svg class="b" style="left:267px;top:329px;" width="12" height="13" viewBox="0 0 12 13"><rect x="0.500" y="0.500" width="11" height="12" fill="#f4f4f4" stroke="#808080"/><rect x="0.500" y="0.500" width="11" height="2.500" fill="#9ab8dc"/><path d="M2.500 5.500h7M2.500 7.500h7M2.500 9.500h7" stroke="#a0a0a0" stroke-width="0.900"/></svg>
<svg class="b" style="left:290px;top:333px;" width="8" height="5" viewBox="0 0 8 5"><path d="M0 0h7.400L3.700 4.200z" fill="#000"/></svg>
<svg class="b" style="left:304px;top:324px;" width="20" height="19" viewBox="0 0 20 19"><rect x="0" y="0" width="4.700" height="10" fill="#10a040"/><rect x="4.700" y="0" width="4.700" height="10" fill="#f4f4f4"/><rect x="9.400" y="0" width="4.600" height="10" fill="#e02020"/><rect x="7" y="7" width="12" height="8" fill="#2040a0"/><path d="M7 7l12 8M19 7l-12 8" stroke="#fff" stroke-width="1.600"/><path d="M13 7v8M7 11h12" stroke="#e02020" stroke-width="1.600"/><path d="M20 13v6h-6z" fill="#000"/></svg>
<svg class="b" style="left:333px;top:323px;" width="20" height="19" viewBox="0 0 20 19"><rect x="0" y="5" width="14" height="8" rx="1" fill="#e02828"/><path d="M2 7.500h3v2h-3zM6.500 7.500h2.500v3.500h-2.500z" stroke="#fff" stroke-width="1" fill="none"/><rect x="12" y="1" width="7.500" height="16.500" fill="#f4f4f4" stroke="#111" stroke-width="1.200"/><rect x="14" y="3.500" width="3" height="2" fill="#111"/><rect x="14" y="8" width="3" height="2" fill="#111"/><rect x="14" y="12.500" width="3" height="2" fill="#111"/></svg>
<div class="b" style="left:8px;top:348px;width:385px;height:624px;background:#3b4453;border:1px solid #3b4453;border-top:2px solid #3b4453"></div>
<div class="b" style="left:10px;top:350px;width:360px;height:26px;background:#ffffff;"></div>
<div class="b" style="left:134px;top:350px;width:1px;height:26px;background:#e0e0e0;"></div>
<div class="b" style="left:367px;top:350px;width:1px;height:26px;background:#e0e0e0;"></div>
<div class="t" style="left:16.0px;top:354.3px;font-size:14.47px;line-height:21px;color:#000;letter-spacing:0.133px;">Nível</div>
<div class="t" style="left:141.0px;top:354.3px;font-size:14.47px;line-height:21px;color:#000;letter-spacing:0.262px;">Título</div>
<div class="b" style="left:370px;top:350px;width:21px;height:621px;background:#f0f0f0;"></div>
<div class="b" style="left:371px;top:612px;width:19px;height:336px;background:#cdcdcd;"></div>
<svg class="b" style="left:375px;top:357px;" width="11" height="7" viewBox="0 0 11 7"><path d="M1 6l4.500-4.500 4.500 4.500" stroke="#555555" stroke-width="1.800" fill="none"/></svg>
<svg class="b" style="left:375px;top:957px;" width="11" height="7" viewBox="0 0 11 7"><path d="M1 1l4.500 4.500 4.500-4.500" stroke="#555555" stroke-width="1.800" fill="none"/></svg>
<svg class="b" style="left:45.2px;top:379.8px;" width="18" height="18" viewBox="0 0 18 18"><rect x="0.600" y="0.600" width="16.500" height="13.400" rx="0.800" fill="#f4f8f8" stroke="#4878b8" stroke-width="1.200"/><rect x="1.800" y="1.800" width="14.100" height="7.400" fill="url(#shg)"/><rect x="1.200" y="9.800" width="15.300" height="3.600" fill="#3f70b4"/><rect x="2.300" y="10.800" width="3.400" height="1.500" fill="#eef4f4"/><rect x="7" y="10.800" width="3.800" height="1.500" fill="#eef4f4"/><rect x="12" y="10.800" width="3.400" height="1.500" fill="#eef4f4"/></svg>
<div class="t" style="left:70.5px;top:377.8px;font-size:14.47px;line-height:21px;color:#f0f0f0;letter-spacing:0.405px;">18</div>
<div class="t" style="left:139.5px;top:377.8px;font-size:14.47px;line-height:21px;color:#f0f0f0;letter-spacing:-0.243px;">Entradas 3</div>
<svg class="b" style="left:45.2px;top:402.8px;" width="18" height="18" viewBox="0 0 18 18"><rect x="0.600" y="0.600" width="16.500" height="13.400" rx="0.800" fill="#f4f8f8" stroke="#4878b8" stroke-width="1.200"/><rect x="1.800" y="1.800" width="14.100" height="7.400" fill="url(#shg)"/><rect x="1.200" y="9.800" width="15.300" height="3.600" fill="#3f70b4"/><rect x="2.300" y="10.800" width="3.400" height="1.500" fill="#eef4f4"/><rect x="7" y="10.800" width="3.800" height="1.500" fill="#eef4f4"/><rect x="12" y="10.800" width="3.400" height="1.500" fill="#eef4f4"/></svg>
<div class="t" style="left:70.5px;top:400.8px;font-size:14.47px;line-height:21px;color:#f0f0f0;letter-spacing:0.405px;">19</div>
<div class="t" style="left:139.5px;top:400.8px;font-size:14.47px;line-height:21px;color:#f0f0f0;letter-spacing:-0.243px;">Entradas 3</div>
<svg class="b" style="left:45.2px;top:425.8px;" width="18" height="18" viewBox="0 0 18 18"><rect x="0.600" y="0.600" width="16.500" height="13.400" rx="0.800" fill="#f4f8f8" stroke="#4878b8" stroke-width="1.200"/><rect x="1.800" y="1.800" width="14.100" height="7.400" fill="url(#shg)"/><rect x="1.200" y="9.800" width="15.300" height="3.600" fill="#3f70b4"/><rect x="2.300" y="10.800" width="3.400" height="1.500" fill="#eef4f4"/><rect x="7" y="10.800" width="3.800" height="1.500" fill="#eef4f4"/><rect x="12" y="10.800" width="3.400" height="1.500" fill="#eef4f4"/></svg>
<div class="t" style="left:70.5px;top:423.8px;font-size:14.47px;line-height:21px;color:#f0f0f0;letter-spacing:0.405px;">20</div>
<div class="t" style="left:139.5px;top:423.8px;font-size:14.47px;line-height:21px;color:#f0f0f0;letter-spacing:-0.243px;">Entradas 3</div>
<svg class="b" style="left:45.2px;top:448.8px;" width="18" height="18" viewBox="0 0 18 18"><rect x="0.600" y="0.600" width="16.500" height="13.400" rx="0.800" fill="#f4f8f8" stroke="#4878b8" stroke-width="1.200"/><rect x="1.800" y="1.800" width="14.100" height="7.400" fill="url(#shg)"/><rect x="1.200" y="9.800" width="15.300" height="3.600" fill="#3f70b4"/><rect x="2.300" y="10.800" width="3.400" height="1.500" fill="#eef4f4"/><rect x="7" y="10.800" width="3.800" height="1.500" fill="#eef4f4"/><rect x="12" y="10.800" width="3.400" height="1.500" fill="#eef4f4"/></svg>
<div class="t" style="left:70.5px;top:446.8px;font-size:14.47px;line-height:21px;color:#f0f0f0;letter-spacing:0.405px;">21</div>
<div class="t" style="left:139.5px;top:446.8px;font-size:14.47px;line-height:21px;color:#f0f0f0;letter-spacing:-0.243px;">Entradas 3</div>
<svg class="b" style="left:45.2px;top:471.8px;" width="18" height="18" viewBox="0 0 18 18"><rect x="0.600" y="0.600" width="16.500" height="13.400" rx="0.800" fill="#f4f8f8" stroke="#4878b8" stroke-width="1.200"/><rect x="1.800" y="1.800" width="14.100" height="7.400" fill="url(#shg)"/><rect x="1.200" y="9.800" width="15.300" height="3.600" fill="#3f70b4"/><rect x="2.300" y="10.800" width="3.400" height="1.500" fill="#eef4f4"/><rect x="7" y="10.800" width="3.800" height="1.500" fill="#eef4f4"/><rect x="12" y="10.800" width="3.400" height="1.500" fill="#eef4f4"/></svg>
<div class="t" style="left:70.5px;top:469.8px;font-size:14.47px;line-height:21px;color:#f0f0f0;letter-spacing:0.405px;">22</div>
<div class="t" style="left:139.5px;top:469.8px;font-size:14.47px;line-height:21px;color:#f0f0f0;letter-spacing:-0.460px;">Saídas 1</div>
<svg class="b" style="left:45.2px;top:494.8px;" width="18" height="18" viewBox="0 0 18 18"><rect x="0.600" y="0.600" width="16.500" height="13.400" rx="0.800" fill="#f4f8f8" stroke="#4878b8" stroke-width="1.200"/><rect x="1.800" y="1.800" width="14.100" height="7.400" fill="url(#shg)"/><rect x="1.200" y="9.800" width="15.300" height="3.600" fill="#3f70b4"/><rect x="2.300" y="10.800" width="3.400" height="1.500" fill="#eef4f4"/><rect x="7" y="10.800" width="3.800" height="1.500" fill="#eef4f4"/><rect x="12" y="10.800" width="3.400" height="1.500" fill="#eef4f4"/></svg>
<div class="t" style="left:70.5px;top:492.8px;font-size:14.47px;line-height:21px;color:#f0f0f0;letter-spacing:0.405px;">23</div>
<div class="t" style="left:139.5px;top:492.8px;font-size:14.47px;line-height:21px;color:#f0f0f0;letter-spacing:-0.460px;">Saídas 1</div>
<svg class="b" style="left:45.2px;top:517.8px;" width="18" height="18" viewBox="0 0 18 18"><rect x="0.600" y="0.600" width="16.500" height="13.400" rx="0.800" fill="#f4f8f8" stroke="#4878b8" stroke-width="1.200"/><rect x="1.800" y="1.800" width="14.100" height="7.400" fill="url(#shg)"/><rect x="1.200" y="9.800" width="15.300" height="3.600" fill="#3f70b4"/><rect x="2.300" y="10.800" width="3.400" height="1.500" fill="#eef4f4"/><rect x="7" y="10.800" width="3.800" height="1.500" fill="#eef4f4"/><rect x="12" y="10.800" width="3.400" height="1.500" fill="#eef4f4"/><path d="M10.500 7h6v10.500l-3-2.500-3 2.500z" fill="#f4c430" stroke="#b8860b" stroke-width="0.700"/></svg>
<div class="t" style="left:70.5px;top:515.8px;font-size:14.47px;line-height:21px;color:#f0f0f0;letter-spacing:0.405px;">24</div>
<div class="t" style="left:139.5px;top:515.8px;font-size:14.47px;line-height:21px;color:#f0f0f0;letter-spacing:-0.460px;">Saídas 1</div>
<svg class="b" style="left:45.2px;top:540.8px;" width="18" height="18" viewBox="0 0 18 18"><rect x="0.600" y="0.600" width="16.500" height="13.400" rx="0.800" fill="#f4f8f8" stroke="#4878b8" stroke-width="1.200"/><rect x="1.800" y="1.800" width="14.100" height="7.400" fill="url(#shg)"/><rect x="1.200" y="9.800" width="15.300" height="3.600" fill="#3f70b4"/><rect x="2.300" y="10.800" width="3.400" height="1.500" fill="#eef4f4"/><rect x="7" y="10.800" width="3.800" height="1.500" fill="#eef4f4"/><rect x="12" y="10.800" width="3.400" height="1.500" fill="#eef4f4"/></svg>
<div class="t" style="left:70.5px;top:538.8px;font-size:14.47px;line-height:21px;color:#f0f0f0;letter-spacing:0.405px;">25</div>
<div class="t" style="left:139.5px;top:538.8px;font-size:14.47px;line-height:21px;color:#f0f0f0;letter-spacing:-0.388px;">Saídas 2</div>
<svg class="b" style="left:45.2px;top:563.8px;" width="18" height="18" viewBox="0 0 18 18"><rect x="0.600" y="0.600" width="16.500" height="13.400" rx="0.800" fill="#f4f8f8" stroke="#4878b8" stroke-width="1.200"/><rect x="1.800" y="1.800" width="14.100" height="7.400" fill="url(#shg)"/><rect x="1.200" y="9.800" width="15.300" height="3.600" fill="#3f70b4"/><rect x="2.300" y="10.800" width="3.400" height="1.500" fill="#eef4f4"/><rect x="7" y="10.800" width="3.800" height="1.500" fill="#eef4f4"/><rect x="12" y="10.800" width="3.400" height="1.500" fill="#eef4f4"/></svg>
<div class="t" style="left:70.5px;top:561.8px;font-size:14.47px;line-height:21px;color:#f0f0f0;letter-spacing:0.405px;">26</div>
<div class="t" style="left:139.5px;top:561.8px;font-size:14.47px;line-height:21px;color:#f0f0f0;letter-spacing:-0.388px;">Saídas 2</div>
<svg class="b" style="left:45.2px;top:586.8px;" width="18" height="18" viewBox="0 0 18 18"><rect x="0.600" y="0.600" width="16.500" height="13.400" rx="0.800" fill="#f4f8f8" stroke="#4878b8" stroke-width="1.200"/><rect x="1.800" y="1.800" width="14.100" height="7.400" fill="url(#shg)"/><rect x="1.200" y="9.800" width="15.300" height="3.600" fill="#3f70b4"/><rect x="2.300" y="10.800" width="3.400" height="1.500" fill="#eef4f4"/><rect x="7" y="10.800" width="3.800" height="1.500" fill="#eef4f4"/><rect x="12" y="10.800" width="3.400" height="1.500" fill="#eef4f4"/></svg>
<div class="t" style="left:70.5px;top:584.8px;font-size:14.47px;line-height:21px;color:#f0f0f0;letter-spacing:0.405px;">27</div>
<div class="t" style="left:139.5px;top:584.8px;font-size:14.47px;line-height:21px;color:#f0f0f0;letter-spacing:-0.388px;">Saídas 2</div>
<svg class="b" style="left:45.2px;top:609.8px;" width="18" height="18" viewBox="0 0 18 18"><rect x="0.600" y="0.600" width="16.500" height="13.400" rx="0.800" fill="#f4f8f8" stroke="#4878b8" stroke-width="1.200"/><rect x="1.800" y="1.800" width="14.100" height="7.400" fill="url(#shg)"/><rect x="1.200" y="9.800" width="15.300" height="3.600" fill="#3f70b4"/><rect x="2.300" y="10.800" width="3.400" height="1.500" fill="#eef4f4"/><rect x="7" y="10.800" width="3.800" height="1.500" fill="#eef4f4"/><rect x="12" y="10.800" width="3.400" height="1.500" fill="#eef4f4"/><path d="M10.500 7h6v10.500l-3-2.500-3 2.500z" fill="#f4c430" stroke="#b8860b" stroke-width="0.700"/></svg>
<div class="t" style="left:70.5px;top:607.8px;font-size:14.47px;line-height:21px;color:#f0f0f0;letter-spacing:0.405px;">28</div>
<div class="t" style="left:139.5px;top:607.8px;font-size:14.47px;line-height:21px;color:#f0f0f0;letter-spacing:-0.223px;">Placa de E/S</div>
<svg class="b" style="left:45.2px;top:632.8px;" width="18" height="18" viewBox="0 0 18 18"><rect x="0.600" y="0.600" width="16.500" height="13.400" rx="0.800" fill="#f4f8f8" stroke="#4878b8" stroke-width="1.200"/><rect x="1.800" y="1.800" width="14.100" height="7.400" fill="url(#shg)"/><rect x="1.200" y="9.800" width="15.300" height="3.600" fill="#3f70b4"/><rect x="2.300" y="10.800" width="3.400" height="1.500" fill="#eef4f4"/><rect x="7" y="10.800" width="3.800" height="1.500" fill="#eef4f4"/><rect x="12" y="10.800" width="3.400" height="1.500" fill="#eef4f4"/></svg>
<div class="t" style="left:70.5px;top:630.8px;font-size:14.47px;line-height:21px;color:#f0f0f0;letter-spacing:0.405px;">29</div>
<div class="t" style="left:139.5px;top:630.8px;font-size:14.47px;line-height:21px;color:#f0f0f0;letter-spacing:0.386px;">Módulo de eixo X</div>
<svg class="b" style="left:45.2px;top:655.8px;" width="18" height="18" viewBox="0 0 18 18"><rect x="0.600" y="0.600" width="16.500" height="13.400" rx="0.800" fill="#f4f8f8" stroke="#4878b8" stroke-width="1.200"/><rect x="1.800" y="1.800" width="14.100" height="7.400" fill="url(#shg)"/><rect x="1.200" y="9.800" width="15.300" height="3.600" fill="#3f70b4"/><rect x="2.300" y="10.800" width="3.400" height="1.500" fill="#eef4f4"/><rect x="7" y="10.800" width="3.800" height="1.500" fill="#eef4f4"/><rect x="12" y="10.800" width="3.400" height="1.500" fill="#eef4f4"/></svg>
<div class="t" style="left:70.5px;top:653.8px;font-size:14.47px;line-height:21px;color:#f0f0f0;letter-spacing:0.405px;">30</div>
<div class="t" style="left:139.5px;top:653.8px;font-size:14.47px;line-height:21px;color:#f0f0f0;letter-spacing:0.337px;">Módulo de eixo Y</div>
<svg class="b" style="left:45.2px;top:678.8px;" width="18" height="18" viewBox="0 0 18 18"><rect x="0.600" y="0.600" width="16.500" height="13.400" rx="0.800" fill="#f4f8f8" stroke="#4878b8" stroke-width="1.200"/><rect x="1.800" y="1.800" width="14.100" height="7.400" fill="url(#shg)"/><rect x="1.200" y="9.800" width="15.300" height="3.600" fill="#3f70b4"/><rect x="2.300" y="10.800" width="3.400" height="1.500" fill="#eef4f4"/><rect x="7" y="10.800" width="3.800" height="1.500" fill="#eef4f4"/><rect x="12" y="10.800" width="3.400" height="1.500" fill="#eef4f4"/></svg>
<div class="t" style="left:70.5px;top:676.8px;font-size:14.47px;line-height:21px;color:#f0f0f0;letter-spacing:0.405px;">31</div>
<div class="t" style="left:139.5px;top:676.8px;font-size:14.47px;line-height:21px;color:#f0f0f0;letter-spacing:0.146px;">Legenda de símbolos</div>
<svg class="b" style="left:45.2px;top:701.8px;" width="18" height="18" viewBox="0 0 18 18"><rect x="0.600" y="0.600" width="16.500" height="13.400" rx="0.800" fill="#f4f8f8" stroke="#4878b8" stroke-width="1.200"/><rect x="1.800" y="1.800" width="14.100" height="7.400" fill="url(#shg)"/><rect x="1.200" y="9.800" width="15.300" height="3.600" fill="#3f70b4"/><rect x="2.300" y="10.800" width="3.400" height="1.500" fill="#eef4f4"/><rect x="7" y="10.800" width="3.800" height="1.500" fill="#eef4f4"/><rect x="12" y="10.800" width="3.400" height="1.500" fill="#eef4f4"/></svg>
<div class="t" style="left:70.5px;top:699.8px;font-size:14.47px;line-height:21px;color:#f0f0f0;letter-spacing:0.405px;">32</div>
<div class="t" style="left:139.5px;top:699.8px;font-size:14.47px;line-height:21px;color:#f0f0f0;letter-spacing:0.146px;">Legenda de símbolos</div>
<svg class="b" style="left:45.2px;top:724.8px;" width="18" height="18" viewBox="0 0 18 18"><rect x="0.600" y="0.600" width="16.500" height="13.400" rx="0.800" fill="#f4f8f8" stroke="#4878b8" stroke-width="1.200"/><rect x="1.800" y="1.800" width="14.100" height="7.400" fill="url(#shg)"/><rect x="1.200" y="9.800" width="15.300" height="3.600" fill="#3f70b4"/><rect x="2.300" y="10.800" width="3.400" height="1.500" fill="#eef4f4"/><rect x="7" y="10.800" width="3.800" height="1.500" fill="#eef4f4"/><rect x="12" y="10.800" width="3.400" height="1.500" fill="#eef4f4"/></svg>
<div class="t" style="left:70.5px;top:722.8px;font-size:14.47px;line-height:21px;color:#f0f0f0;letter-spacing:0.405px;">33</div>
<div class="t" style="left:139.5px;top:722.8px;font-size:14.47px;line-height:21px;color:#f0f0f0;letter-spacing:0.156px;">Lista de símbolo</div>
<svg class="b" style="left:45.2px;top:747.8px;" width="18" height="18" viewBox="0 0 18 18"><rect x="0.600" y="0.600" width="16.500" height="13.400" rx="0.800" fill="#f4f8f8" stroke="#4878b8" stroke-width="1.200"/><rect x="1.800" y="1.800" width="14.100" height="7.400" fill="url(#shg)"/><rect x="1.200" y="9.800" width="15.300" height="3.600" fill="#3f70b4"/><rect x="2.300" y="10.800" width="3.400" height="1.500" fill="#eef4f4"/><rect x="7" y="10.800" width="3.800" height="1.500" fill="#eef4f4"/><rect x="12" y="10.800" width="3.400" height="1.500" fill="#eef4f4"/></svg>
<div class="t" style="left:70.5px;top:745.8px;font-size:14.47px;line-height:21px;color:#f0f0f0;letter-spacing:0.405px;">34</div>
<div class="t" style="left:139.5px;top:745.8px;font-size:14.47px;line-height:21px;color:#f0f0f0;letter-spacing:0.030px;">Tabelas de referência cruzada</div>
<svg class="b" style="left:45.2px;top:770.8px;" width="18" height="18" viewBox="0 0 18 18"><rect x="0.600" y="0.600" width="16.500" height="13.400" rx="0.800" fill="#f4f8f8" stroke="#4878b8" stroke-width="1.200"/><rect x="1.800" y="1.800" width="14.100" height="7.400" fill="url(#shg)"/><rect x="1.200" y="9.800" width="15.300" height="3.600" fill="#3f70b4"/><rect x="2.300" y="10.800" width="3.400" height="1.500" fill="#eef4f4"/><rect x="7" y="10.800" width="3.800" height="1.500" fill="#eef4f4"/><rect x="12" y="10.800" width="3.400" height="1.500" fill="#eef4f4"/></svg>
<div class="t" style="left:70.5px;top:768.8px;font-size:14.47px;line-height:21px;color:#f0f0f0;letter-spacing:0.405px;">35</div>
<div class="t" style="left:139.5px;top:768.8px;font-size:14.47px;line-height:21px;color:#f0f0f0;letter-spacing:0.158px;">Resumo de fio</div>
<svg class="b" style="left:45.2px;top:793.8px;" width="18" height="18" viewBox="0 0 18 18"><rect x="0.600" y="0.600" width="16.500" height="13.400" rx="0.800" fill="#f4f8f8" stroke="#4878b8" stroke-width="1.200"/><rect x="1.800" y="1.800" width="14.100" height="7.400" fill="url(#shg)"/><rect x="1.200" y="9.800" width="15.300" height="3.600" fill="#3f70b4"/><rect x="2.300" y="10.800" width="3.400" height="1.500" fill="#eef4f4"/><rect x="7" y="10.800" width="3.800" height="1.500" fill="#eef4f4"/><rect x="12" y="10.800" width="3.400" height="1.500" fill="#eef4f4"/></svg>
<div class="t" style="left:70.5px;top:791.8px;font-size:14.47px;line-height:21px;color:#f0f0f0;letter-spacing:0.405px;">36</div>
<div class="t" style="left:139.5px;top:791.8px;font-size:14.47px;line-height:21px;color:#f0f0f0;letter-spacing:-0.011px;">Resumo conectores</div>
<svg class="b" style="left:45.2px;top:816.8px;" width="18" height="18" viewBox="0 0 18 18"><rect x="0.600" y="0.600" width="16.500" height="13.400" rx="0.800" fill="#f4f8f8" stroke="#4878b8" stroke-width="1.200"/><rect x="1.800" y="1.800" width="14.100" height="7.400" fill="url(#shg)"/><rect x="1.200" y="9.800" width="15.300" height="3.600" fill="#3f70b4"/><rect x="2.300" y="10.800" width="3.400" height="1.500" fill="#eef4f4"/><rect x="7" y="10.800" width="3.800" height="1.500" fill="#eef4f4"/><rect x="12" y="10.800" width="3.400" height="1.500" fill="#eef4f4"/></svg>
<div class="t" style="left:70.5px;top:814.8px;font-size:14.47px;line-height:21px;color:#f0f0f0;letter-spacing:0.405px;">37</div>
<div class="t" style="left:139.5px;top:814.8px;font-size:14.47px;line-height:21px;color:#f0f0f0;letter-spacing:0.187px;">Layout de painel</div>
<div class="b" style="left:10px;top:836px;width:358px;height:23px;background:#a8caf2;border:1px dotted #1a2a44;"></div>
<svg class="b" style="left:45.2px;top:839.8px;" width="18" height="18" viewBox="0 0 18 18"><rect x="0.600" y="0.600" width="16.500" height="13.400" rx="0.800" fill="#f4f8f8" stroke="#4878b8" stroke-width="1.200"/><rect x="1.800" y="1.800" width="14.100" height="7.400" fill="url(#shg)"/><rect x="1.200" y="9.800" width="15.300" height="3.600" fill="#3f70b4"/><rect x="2.300" y="10.800" width="3.400" height="1.500" fill="#eef4f4"/><rect x="7" y="10.800" width="3.800" height="1.500" fill="#eef4f4"/><rect x="12" y="10.800" width="3.400" height="1.500" fill="#eef4f4"/></svg>
<div class="t" style="left:70.5px;top:837.8px;font-size:14.47px;line-height:21px;color:#000;letter-spacing:0.405px;">38</div>
<div class="t" style="left:139.5px;top:837.8px;font-size:14.47px;line-height:21px;color:#000;letter-spacing:0.006px;">Painéis de layout</div>
<svg class="b" style="left:45.2px;top:862.8px;" width="18" height="18" viewBox="0 0 18 18"><rect x="0.600" y="0.600" width="16.500" height="13.400" rx="0.800" fill="#f4f8f8" stroke="#4878b8" stroke-width="1.200"/><rect x="1.800" y="1.800" width="14.100" height="7.400" fill="url(#shg)"/><rect x="1.200" y="9.800" width="15.300" height="3.600" fill="#3f70b4"/><rect x="2.300" y="10.800" width="3.400" height="1.500" fill="#eef4f4"/><rect x="7" y="10.800" width="3.800" height="1.500" fill="#eef4f4"/><rect x="12" y="10.800" width="3.400" height="1.500" fill="#eef4f4"/></svg>
<div class="t" style="left:70.5px;top:860.8px;font-size:14.47px;line-height:21px;color:#f0f0f0;letter-spacing:0.405px;">39</div>
<div class="t" style="left:139.5px;top:860.8px;font-size:14.47px;line-height:21px;color:#f0f0f0;letter-spacing:0.006px;">Painéis de layout</div>
<svg class="b" style="left:45.2px;top:885.8px;" width="18" height="18" viewBox="0 0 18 18"><rect x="0.600" y="0.600" width="16.500" height="13.400" rx="0.800" fill="#f4f8f8" stroke="#4878b8" stroke-width="1.200"/><rect x="1.800" y="1.800" width="14.100" height="7.400" fill="url(#shg)"/><rect x="1.200" y="9.800" width="15.300" height="3.600" fill="#3f70b4"/><rect x="2.300" y="10.800" width="3.400" height="1.500" fill="#eef4f4"/><rect x="7" y="10.800" width="3.800" height="1.500" fill="#eef4f4"/><rect x="12" y="10.800" width="3.400" height="1.500" fill="#eef4f4"/></svg>
<div class="t" style="left:70.5px;top:883.8px;font-size:14.47px;line-height:21px;color:#f0f0f0;letter-spacing:0.405px;">40</div>
<div class="t" style="left:139.5px;top:883.8px;font-size:14.47px;line-height:21px;color:#f0f0f0;letter-spacing:-0.015px;">Régua de bornes  X1 +Q1</div>
<svg class="b" style="left:45.2px;top:908.8px;" width="18" height="18" viewBox="0 0 18 18"><rect x="0.600" y="0.600" width="16.500" height="13.400" rx="0.800" fill="#f4f8f8" stroke="#4878b8" stroke-width="1.200"/><rect x="1.800" y="1.800" width="14.100" height="7.400" fill="url(#shg)"/><rect x="1.200" y="9.800" width="15.300" height="3.600" fill="#3f70b4"/><rect x="2.300" y="10.800" width="3.400" height="1.500" fill="#eef4f4"/><rect x="7" y="10.800" width="3.800" height="1.500" fill="#eef4f4"/><rect x="12" y="10.800" width="3.400" height="1.500" fill="#eef4f4"/></svg>
<div class="t" style="left:70.5px;top:906.8px;font-size:14.47px;line-height:21px;color:#f0f0f0;letter-spacing:0.405px;">41</div>
<div class="t" style="left:139.5px;top:906.8px;font-size:14.47px;line-height:21px;color:#f0f0f0;letter-spacing:-0.015px;">Régua de bornes  X1 +Q1</div>
<svg class="b" style="left:45.2px;top:931.8px;" width="18" height="18" viewBox="0 0 18 18"><rect x="0.600" y="0.600" width="16.500" height="13.400" rx="0.800" fill="#f4f8f8" stroke="#4878b8" stroke-width="1.200"/><rect x="1.800" y="1.800" width="14.100" height="7.400" fill="url(#shg)"/><rect x="1.200" y="9.800" width="15.300" height="3.600" fill="#3f70b4"/><rect x="2.300" y="10.800" width="3.400" height="1.500" fill="#eef4f4"/><rect x="7" y="10.800" width="3.800" height="1.500" fill="#eef4f4"/><rect x="12" y="10.800" width="3.400" height="1.500" fill="#eef4f4"/></svg>
<div class="t" style="left:70.5px;top:929.8px;font-size:14.47px;line-height:21px;color:#f0f0f0;letter-spacing:0.405px;">42</div>
<div class="t" style="left:139.5px;top:929.8px;font-size:14.47px;line-height:21px;color:#f0f0f0;letter-spacing:0.020px;">Régua de bornes</div>
<div class="b" style="left:406px;top:252px;width:1514px;height:583.6px;background:#222933;"></div>
<div class="t" style="left:409.3px;top:258.1px;font-size:14.47px;line-height:21px;color:#e8e8e8;letter-spacing:0.503px;">[−][Top][2D Wireframe]</div>
<svg class="b" style="left:0;top:0" width="846" height="840" viewBox="0 0 846 840"><path d="M448 305.500h22M459 291.500v27M479 318.500V287.500h9a8.300 8.300 0 0 1 0 16.600h-9M503 292.500l6-5v31" fill="none" stroke="#19d919" stroke-width="1.300"/><path d="M448.500 327.300H860" fill="none" stroke="#19d919" stroke-width="1.400" stroke-dasharray="22.800 11.600" stroke-dashoffset="8.300"/><path d="M448.500 815.800H860" fill="none" stroke="#19d919" stroke-width="1.400" stroke-dasharray="22.800 11.600" stroke-dashoffset="8.300"/><path d="M448.500 327.300V815.800" fill="none" stroke="#19d919" stroke-width="1.400" stroke-dasharray="22.600 11.700" stroke-dashoffset="6.700"/><circle cx="509.1" cy="388.7" r="21.300" fill="none" stroke="#f4f400" stroke-width="1.400"/><circle cx="509.1" cy="388.7" r="12.800" fill="#e01818"/><circle cx="509.1" cy="388.7" r="8.800" fill="none" stroke="#b01212" stroke-width="3" stroke-dasharray="5 1.500"/><circle cx="509.1" cy="388.7" r="5.600" fill="#222933"/><rect x="508.1" y="387.7" width="2" height="2" fill="#f4f400"/><rect x="502.9" y="360.800" width="12.500" height="2" fill="#f4f400"/><defs><path id="arcT" d="M495.50 383.70a14.500 14.500 0 0 1 26.60 -1.40"/><path id="arcB" d="M499.30 405.30a19.300 19.300 0 0 0 19.600 0"/></defs><text font-family="Liberation Sans, sans-serif" font-size="6.600" fill="#f4f400" stroke="#f4f400" stroke-width="0.250"><textPath href="#arcT" textLength="32.500" lengthAdjust="spacingAndGlyphs">EMERGENCY</textPath></text><text font-family="Liberation Sans, sans-serif" font-size="6.400" fill="#f4f400" stroke="#f4f400" stroke-width="0.250"><textPath href="#arcB" textLength="19.800" lengthAdjust="spacing">STOP</textPath></text><rect x="616.1" y="353.400" width="30.500" height="12.600" fill="none" stroke="#dcdcdc" stroke-width="1.600"/><rect x="648.4" y="358.200" width="2.500" height="2.500" fill="#f4f400"/><rect x="610.3" y="377" width="42.200" height="23.600" fill="none" stroke="#dcdcdc" stroke-width="1.700"/><rect x="613.45" y="382.25" width="5.60" height="6.50" rx="1.800" fill="none" stroke="#ffffff" stroke-width="2.3"/><rect x="613.45" y="388.75" width="5.60" height="6.50" rx="1.800" fill="none" stroke="#ffffff" stroke-width="2.3"/><rect x="623.55" y="382.25" width="5.60" height="6.50" rx="1.800" fill="none" stroke="#ffffff" stroke-width="2.3"/><rect x="623.55" y="388.75" width="5.60" height="6.50" rx="1.800" fill="none" stroke="#ffffff" stroke-width="2.3"/><rect x="633.65" y="382.25" width="5.60" height="6.50" rx="1.800" fill="none" stroke="#ffffff" stroke-width="2.3"/><rect x="633.65" y="388.75" width="5.60" height="6.50" rx="1.800" fill="none" stroke="#ffffff" stroke-width="2.3"/><rect x="643.75" y="382.25" width="5.60" height="6.50" rx="1.800" fill="none" stroke="#ffffff" stroke-width="2.3"/><rect x="643.75" y="388.75" width="5.60" height="6.50" rx="1.800" fill="none" stroke="#ffffff" stroke-width="2.3"/><rect x="738.3" y="353.400" width="30.500" height="12.600" fill="none" stroke="#dcdcdc" stroke-width="1.600"/><rect x="770.6" y="358.200" width="2.500" height="2.500" fill="#f4f400"/><rect x="732.5" y="377" width="42.200" height="23.600" fill="none" stroke="#dcdcdc" stroke-width="1.700"/><rect x="735.65" y="382.25" width="5.60" height="6.50" rx="1.800" fill="none" stroke="#ffffff" stroke-width="2.3"/><rect x="735.65" y="388.75" width="5.60" height="6.50" rx="1.800" fill="none" stroke="#ffffff" stroke-width="2.3"/><rect x="745.75" y="382.25" width="5.60" height="6.50" rx="1.800" fill="none" stroke="#ffffff" stroke-width="2.3"/><rect x="745.75" y="388.75" width="5.60" height="6.50" rx="1.800" fill="none" stroke="#ffffff" stroke-width="2.3"/><rect x="755.85" y="382.25" width="5.60" height="6.50" rx="1.800" fill="none" stroke="#ffffff" stroke-width="2.3"/><rect x="755.85" y="388.75" width="5.60" height="6.50" rx="1.800" fill="none" stroke="#ffffff" stroke-width="2.3"/><rect x="765.95" y="382.25" width="5.60" height="6.50" rx="1.800" fill="none" stroke="#ffffff" stroke-width="2.3"/><rect x="765.95" y="388.75" width="5.60" height="6.50" rx="1.800" fill="none" stroke="#ffffff" stroke-width="2.3"/><rect x="500.05" y="489.8" width="18.100" height="29.900" fill="none" stroke="#dcdcdc" stroke-width="1.300"/><path d="M500.05 501.1h18.100" stroke="#dcdcdc" stroke-width="1.100"/><circle cx="509.1" cy="510.9" r="7.2" fill="none" stroke="#19d919" stroke-width="1.500"/><path d="M504.1 505.9l10.1 10.1M514.1 505.9l-10.1 10.1" stroke="#19d919" stroke-width="1.300"/><rect x="504.1" y="493.0" width="10" height="1.600" fill="#f4f400"/><rect x="505.6" y="495.8" width="7" height="1.500" fill="#f4f400"/><rect x="507.6" y="521.4" width="3.500" height="1.800" fill="#f4f400"/><rect x="622.25" y="489.8" width="18.100" height="29.900" fill="none" stroke="#dcdcdc" stroke-width="1.300"/><path d="M622.25 501.1h18.100" stroke="#dcdcdc" stroke-width="1.100"/><circle cx="631.3" cy="510.9" r="7.2" fill="none" stroke="#19d919" stroke-width="1.500"/><path d="M626.3 505.9l10.1 10.1M636.3 505.9l-10.1 10.1" stroke="#19d919" stroke-width="1.300"/><rect x="629.8" y="521.4" width="3.500" height="1.800" fill="#f4f400"/><rect x="744.45" y="489.8" width="18.100" height="29.900" fill="none" stroke="#dcdcdc" stroke-width="1.300"/><path d="M744.45 501.1h18.100" stroke="#dcdcdc" stroke-width="1.100"/><circle cx="753.5" cy="510.9" r="7.2" fill="#ffffff"/><rect x="748.5" y="493.0" width="10" height="1.600" fill="#f4f400"/><rect x="750.0" y="495.8" width="7" height="1.500" fill="#f4f400"/><rect x="752.0" y="521.4" width="3.500" height="1.800" fill="#f4f400"/><rect x="500.05" y="611.9" width="18.100" height="29.900" fill="none" stroke="#dcdcdc" stroke-width="1.300"/><path d="M500.05 623.2h18.100" stroke="#dcdcdc" stroke-width="1.100"/><circle cx="509.1" cy="633.0" r="7.2" fill="none" stroke="#f4f400" stroke-width="1.500"/><path d="M504.1 628.0l10.1 10.1M514.1 628.0l-10.1 10.1" stroke="#f4f400" stroke-width="1.300"/><rect x="504.1" y="615.1" width="10" height="1.600" fill="#f4f400"/><rect x="505.6" y="617.9" width="7" height="1.500" fill="#f4f400"/><rect x="507.6" y="643.5" width="3.500" height="1.800" fill="#f4f400"/><rect x="622.25" y="611.9" width="18.100" height="29.900" fill="none" stroke="#dcdcdc" stroke-width="1.300"/><path d="M622.25 623.2h18.100" stroke="#dcdcdc" stroke-width="1.100"/><circle cx="631.3" cy="633.0" r="7.2" fill="none" stroke="#f4f400" stroke-width="1.500"/><path d="M626.3 628.0l10.1 10.1M636.3 628.0l-10.1 10.1" stroke="#f4f400" stroke-width="1.300"/><rect x="629.8" y="643.5" width="3.500" height="1.800" fill="#f4f400"/><rect x="744.45" y="611.9" width="18.100" height="29.900" fill="none" stroke="#dcdcdc" stroke-width="1.300"/><path d="M744.45 623.2h18.100" stroke="#dcdcdc" stroke-width="1.100"/><circle cx="753.5" cy="633.0" r="7.2" fill="none" stroke="#dcdcdc" stroke-width="1.500"/><path d="M748.5 628.0l10.1 10.1M758.5 628.0l-10.1 10.1" stroke="#dcdcdc" stroke-width="1.300"/><rect x="748.5" y="615.1" width="10" height="1.600" fill="#f4f400"/><rect x="750.0" y="617.9" width="7" height="1.500" fill="#f4f400"/><rect x="752.0" y="643.5" width="3.500" height="1.800" fill="#f4f400"/><rect x="500.05" y="734.1" width="18.100" height="29.900" fill="none" stroke="#dcdcdc" stroke-width="1.300"/><path d="M500.05 745.4h18.100" stroke="#dcdcdc" stroke-width="1.100"/><circle cx="509.1" cy="755.2" r="7.2" fill="#ffffff"/><rect x="504.1" y="737.3" width="10" height="1.600" fill="#f4f400"/><rect x="505.6" y="740.1" width="7" height="1.500" fill="#f4f400"/><rect x="507.6" y="765.7" width="3.500" height="1.800" fill="#f4f400"/><rect x="622.25" y="734.1" width="18.100" height="29.900" fill="none" stroke="#dcdcdc" stroke-width="1.300"/><path d="M622.25 745.4h18.100" stroke="#dcdcdc" stroke-width="1.100"/><circle cx="631.3" cy="755.2" r="7.2" fill="none" stroke="#f4f400" stroke-width="1.500"/><path d="M626.3 750.2l10.1 10.1M636.3 750.2l-10.1 10.1" stroke="#f4f400" stroke-width="1.300"/><rect x="626.3" y="737.3" width="10" height="1.600" fill="#f4f400"/><rect x="627.8" y="740.1" width="7" height="1.500" fill="#f4f400"/><rect x="629.8" y="765.7" width="3.500" height="1.800" fill="#f4f400"/><rect x="744.45" y="734.1" width="18.100" height="29.900" fill="none" stroke="#dcdcdc" stroke-width="1.300"/><path d="M744.45 745.4h18.100" stroke="#dcdcdc" stroke-width="1.100"/><circle cx="753.5" cy="755.2" r="7.2" fill="none" stroke="#dcdcdc" stroke-width="1.400"/><rect x="752.2" y="748.7" width="2.600" height="13" fill="none" stroke="#dcdcdc" stroke-width="1"/><rect x="748.5" y="737.3" width="10" height="1.600" fill="#f4f400"/><rect x="750.0" y="740.1" width="7" height="1.500" fill="#f4f400"/><rect x="752.0" y="765.7" width="3.500" height="1.800" fill="#f4f400"/></svg>
<div class="b" style="left:406px;top:842px;width:75px;height:48px;background:#222933;border-radius:4px 0 0 4px;"></div>
<svg class="b" style="left:411px;top:855.5px;" width="6" height="21" viewBox="0 0 6 21"><rect x="0" y="0.0" width="1.800" height="1.800" fill="#d8d8d8"/><rect x="3.700" y="0.0" width="1.800" height="1.800" fill="#d8d8d8"/><rect x="0" y="3.1" width="1.800" height="1.800" fill="#d8d8d8"/><rect x="3.700" y="3.1" width="1.800" height="1.800" fill="#d8d8d8"/><rect x="0" y="6.2" width="1.800" height="1.800" fill="#d8d8d8"/><rect x="3.700" y="6.2" width="1.800" height="1.800" fill="#d8d8d8"/><rect x="0" y="9.3" width="1.800" height="1.800" fill="#d8d8d8"/><rect x="3.700" y="9.3" width="1.800" height="1.800" fill="#d8d8d8"/><rect x="0" y="12.4" width="1.800" height="1.800" fill="#d8d8d8"/><rect x="3.700" y="12.4" width="1.800" height="1.800" fill="#d8d8d8"/><rect x="0" y="15.5" width="1.800" height="1.800" fill="#d8d8d8"/><rect x="3.700" y="15.5" width="1.800" height="1.800" fill="#d8d8d8"/><rect x="0" y="18.6" width="1.800" height="1.800" fill="#d8d8d8"/><rect x="3.700" y="18.6" width="1.800" height="1.800" fill="#d8d8d8"/></svg>
<svg class="b" style="left:425px;top:858.5px;" width="12" height="12" viewBox="0 0 12 12"><path d="M1 1l10 10M11 1L1 11" stroke="#e0e0e0" stroke-width="2"/></svg>
<svg class="b" style="left:452px;top:855px;" width="20" height="20" viewBox="0 0 20 20"><path d="M2 17.500L11.500 8a5 5 0 0 1 6.500-6l-3.500 3.500 0.500 2.500 2.500 0.500 3-3.500a5 5 0 0 1-6.500 6L4.500 20z" fill="#c4c4c4" transform="translate(-1,-1.500)"/></svg>
<div class="b" style="left:478px;top:842px;width:1442px;height:48px;background:#ffffff;border-radius:3px 0 0 3px;"></div>
<svg class="b" style="left:483.5px;top:855.5px;" width="18.5" height="19" viewBox="0 0 18.5 19"><rect x="0" y="0" width="18" height="19" fill="#ffffff"/><rect x="0" y="0" width="1.600" height="19" fill="#0d8282"/><rect x="7.800" y="0" width="1.600" height="19" fill="#0d8282"/><rect x="15" y="0.500" width="2.300" height="18.500" fill="#0d8282"/><rect x="17.300" y="1.500" width="0.800" height="17.500" fill="#303030"/><rect x="0" y="0" width="16.500" height="1.400" fill="#0d8282"/><rect x="0" y="4.800" width="17" height="1.300" fill="#0d8282"/><path d="M2.800 3.400h4v-1l-2-1.200-2 1.200z" fill="#d8d020"/><path d="M10.600 3.400h4v-1l-2-1.200-2 1.200z" fill="#d8d020"/><rect x="3" y="8" width="3.300" height="1.100" fill="#1010a0"/><rect x="3" y="11.500" width="3.600" height="3.600" fill="#0000a0"/><rect x="2.500" y="16.500" width="1.200" height="1.200" fill="#707070"/><rect x="4.800" y="16.500" width="1.200" height="1.200" fill="#707070"/><rect x="7" y="16.500" width="1.200" height="1.800" fill="#303030"/><path d="M10.200 17.800l0.600-5 4-5.300 2.400 1.600-3.800 5.600z" fill="#181818"/><path d="M11.800 14.200l3-4.500 1.100 0.800-3 4.500z" fill="#f4f000"/><circle cx="15.700" cy="7.200" r="2.100" fill="#141414"/><circle cx="15.600" cy="6.800" r="1.100" fill="#700808"/></svg>
<svg class="b" style="left:505px;top:862px;" width="10" height="6" viewBox="0 0 10 6"><path d="M0 0h9.600L4.800 5z" fill="#808080"/></svg>
<div class="t" style="left:522.2px;top:856.3px;font-size:13.87px;line-height:21px;color:#000;letter-spacing:-0.577px;font-weight:bold;">DLAYOUT</div>
<div class="b" style="left:406px;top:895px;width:20px;height:93px;background:#222933;border-radius:4px;"></div>
<svg class="b" style="left:410px;top:903px;" width="3" height="9" viewBox="0 0 3 9"><rect x="0" y="0.0" width="1" height="1" fill="#9aa1ad"/><rect x="2" y="0.0" width="1" height="1" fill="#9aa1ad"/><rect x="0" y="2.2" width="1" height="1" fill="#9aa1ad"/><rect x="2" y="2.2" width="1" height="1" fill="#9aa1ad"/><rect x="0" y="4.4" width="1" height="1" fill="#9aa1ad"/><rect x="2" y="4.4" width="1" height="1" fill="#9aa1ad"/><rect x="0" y="6.6" width="1" height="1" fill="#9aa1ad"/><rect x="2" y="6.6" width="1" height="1" fill="#9aa1ad"/></svg>
<div class="b" style="left:1916px;top:890px;width:4px;height:103px;background:#262d38;"></div>
<div class="b" style="left:431px;top:898px;width:1485px;height:86px;background:#ffffff;border-bottom:1px solid #c8c8c8"></div>
<div class="b" style="left:504.5px;top:900px;width:1411px;height:22px;background:#f0f0f0;border:1px solid #d9d9d9;"></div>
<div class="b" style="left:572.5px;top:900px;width:1px;height:22px;background:#d9d9d9;"></div>
<div class="b" style="left:653.5px;top:900px;width:1px;height:22px;background:#d9d9d9;"></div>
<div class="b" style="left:742.6px;top:900px;width:1px;height:22px;background:#d9d9d9;"></div>
<div class="b" style="left:824.5px;top:900px;width:1px;height:22px;background:#d9d9d9;"></div>
<div class="b" style="left:435.5px;top:925px;width:1480px;height:27.5px;background:#f0f0f0;"></div>
<div class="t" style="left:465.2px;top:902.9px;font-size:11.19px;line-height:16px;color:#000;letter-spacing:-0.397px;">Folhas</div>
<div class="t" style="left:534.9px;top:904.5px;font-size:11.19px;line-height:16px;color:#000;letter-spacing:-0.235px;">Linhas</div>
<div class="t" style="left:605.3px;top:904.5px;font-size:10.89px;line-height:16px;color:#000;letter-spacing:-0.456px;">Símbolos</div>
<div class="t" style="left:685.8px;top:904.5px;font-size:11.19px;line-height:16px;color:#000;letter-spacing:-0.413px;">Diagramas</div>
<div class="t" style="left:775.0px;top:904.5px;font-size:11.19px;line-height:16px;color:#000;letter-spacing:0.038px;">Arquivos</div>
<svg class="b" style="left:440px;top:900px;" width="19" height="15" viewBox="0 0 19 15"><rect x="0.600" y="0.600" width="13" height="9" fill="#fff" stroke="#606060" stroke-width="1.100"/><rect x="4" y="3.500" width="13.500" height="9.500" fill="#fff" stroke="#606060" stroke-width="1.100"/><path d="M4 11h13.500" stroke="#606060" stroke-width="1"/></svg>
<svg class="b" style="left:512px;top:902px;" width="17" height="11" viewBox="0 0 17 11"><path d="M0 2h13M0 6h13M0 9.500h9" stroke="#505050" stroke-width="1.100"/><circle cx="13.500" cy="2" r="1.800" fill="none" stroke="#303030" stroke-width="1"/><circle cx="13.500" cy="8" r="1.800" fill="none" stroke="#303030" stroke-width="1"/></svg>
<svg class="b" style="left:584.5px;top:902px;" width="11" height="15" viewBox="0 0 11 15"><circle cx="5.500" cy="7.500" r="4" fill="none" stroke="#404040" stroke-width="1.100"/><path d="M5.500 0v3.500M5.500 11.500v3.500M3 5l5 5" stroke="#404040" stroke-width="1.100"/></svg>
<svg class="b" style="left:661px;top:901.5px;" width="17" height="19" viewBox="0 0 17 19"><rect x="5.500" y="0.500" width="6" height="4" fill="none" stroke="#404040" stroke-width="1.100"/><path d="M8.500 4.500v4M0 8.500h17M3 8.500v4M8.500 8.500v9M14 8.500v4" stroke="#404040" stroke-width="1.100"/><path d="M3 14v4M14 14v4" stroke="#404040" stroke-width="1.100" stroke-dasharray="1.500 1"/></svg>
<svg class="b" style="left:754px;top:903px;" width="11" height="11" viewBox="0 0 11 11"><path d="M0.600 2.500v6.500a4.800 2 0 0 0 9.600 0v-6.500" fill="none" stroke="#303030" stroke-width="1.100"/><ellipse cx="5.400" cy="2.500" rx="4.800" ry="2" fill="none" stroke="#303030" stroke-width="1.100"/></svg>
<svg class="b" style="left:833px;top:903px;" width="13" height="13" viewBox="0 0 13 13"><path d="M1 13V1h12" stroke="#303030" stroke-width="1.600" fill="none"/><path d="M4.500 13V4.500H13" stroke="#707070" stroke-width="1.600" fill="none"/></svg>
<svg class="b" style="left:439px;top:929px;" width="20" height="20" viewBox="0 0 20 20"><rect x="4" y="4.500" width="15" height="13" rx="2" fill="#38b038" stroke="#1a7a1a" stroke-width="1"/><rect x="1" y="2" width="15" height="13" rx="2" fill="#58d458" stroke="#1a8a1a" stroke-width="1"/><path d="M1.500 5V3.500a1.500 1.500 0 0 1 1.500-1.500h5l1.500 2" fill="none" stroke="#1a8a1a" stroke-width="1"/><rect x="2.500" y="5" width="12" height="8.500" rx="1" fill="#7ce87c"/></svg>
<svg class="b" style="left:472px;top:932px;" width="16" height="15" viewBox="0 0 16 15"><path d="M1 1H11.5L15.0 4.500V14.0H1z" fill="url(#shg2)" stroke="#4f86c6" stroke-width="1.300"/><rect x="2" y="9.8" width="12.0" height="3.500" fill="#4f86c6"/><rect x="3.0" y="10.8" width="2.4" height="1.500" fill="#e8f0fa"/><rect x="6.7" y="10.8" width="2.4" height="1.500" fill="#e8f0fa"/><rect x="10.3" y="10.8" width="2.4" height="1.500" fill="#e8f0fa"/></svg>
<svg class="b" style="left:468px;top:928px;" width="14" height="14" viewBox="0 0 14 14"><path d="M7 0l1.800 4.500 4.700-1.300-2.800 3.800 2.800 3.800-4.700-1.300L7 14l-1.800-4.500-4.700 1.300 2.800-3.800L0.500 3.200l4.700 1.300z" fill="#f8e020" stroke="#b89800" stroke-width="0.500"/></svg>
<svg class="b" style="left:497px;top:929px;" width="16" height="14" viewBox="0 0 16 14"><path d="M1 1H11.5L15.0 4.500V13.0H1z" fill="url(#shg2)" stroke="#4f86c6" stroke-width="1.300"/><rect x="2" y="8.8" width="12.0" height="3.500" fill="#4f86c6"/><rect x="3.0" y="9.8" width="2.4" height="1.500" fill="#e8f0fa"/><rect x="6.7" y="9.8" width="2.4" height="1.500" fill="#e8f0fa"/><rect x="10.3" y="9.8" width="2.4" height="1.500" fill="#e8f0fa"/></svg>
<svg class="b" style="left:503px;top:934px;" width="14" height="15" viewBox="0 0 14 15"><path d="M0.500 0.500h13v13.500h-11l-2-2z" fill="#9ec4ea" stroke="#3a6aa8" stroke-width="1"/><rect x="3" y="0.500" width="8" height="5" fill="#eaf2fb"/><rect x="3.500" y="9" width="7" height="5" fill="#3a6aa8"/></svg>
<svg class="b" style="left:526px;top:931px;" width="20" height="16" viewBox="0 0 20 16"><path d="M1 1H15.5L19.0 4.500V15.0H1z" fill="url(#shg2)" stroke="#4f86c6" stroke-width="1.300"/><rect x="2" y="10.8" width="16.0" height="3.500" fill="#4f86c6"/><rect x="3.0" y="11.8" width="3.7" height="1.500" fill="#e8f0fa"/><rect x="8.0" y="11.8" width="3.7" height="1.500" fill="#e8f0fa"/><rect x="13.0" y="11.8" width="3.7" height="1.500" fill="#e8f0fa"/></svg>
<svg class="b" style="left:555px;top:928px;" width="15" height="13" viewBox="0 0 15 13"><path d="M1 1H10.5L14.0 4.500V12.0H1z" fill="url(#shg2)" stroke="#4f86c6" stroke-width="1.300"/><rect x="2" y="7.8" width="11.0" height="3.500" fill="#4f86c6"/><rect x="3.0" y="8.8" width="2.0" height="1.500" fill="#e8f0fa"/><rect x="6.3" y="8.8" width="2.0" height="1.500" fill="#e8f0fa"/><rect x="9.7" y="8.8" width="2.0" height="1.500" fill="#e8f0fa"/></svg>
<svg class="b" style="left:563px;top:934px;" width="12" height="14" viewBox="0 0 12 14"><rect x="0.500" y="0.500" width="11" height="13" fill="#f4f4f4" stroke="#808080"/><rect x="0.500" y="0.500" width="11" height="2.500" fill="#9ab8dc"/><path d="M2.500 5.500h7M2.500 7.500h7M2.500 9.500h7M2.500 11.500h7" stroke="#a0a0a0" stroke-width="0.900"/></svg>
<svg class="b" style="left:584px;top:929px;" width="20" height="20" viewBox="0 0 20 20"><rect x="0.500" y="0.500" width="9" height="19" fill="#1f3a8a" stroke="#0c1c50" stroke-width="1"/><path d="M2 3.0h6" stroke="#9ab8e8" stroke-width="0.900"/><path d="M2 5.3h6" stroke="#9ab8e8" stroke-width="0.900"/><path d="M2 7.6h6" stroke="#9ab8e8" stroke-width="0.900"/><path d="M2 9.9h6" stroke="#9ab8e8" stroke-width="0.900"/><path d="M2 12.2h6" stroke="#9ab8e8" stroke-width="0.900"/><path d="M2 14.5h6" stroke="#9ab8e8" stroke-width="0.900"/><path d="M2 16.8h6" stroke="#9ab8e8" stroke-width="0.900"/><rect x="9.500" y="2" width="10.500" height="17" fill="#2a7ad0" stroke="#1a4a90" stroke-width="0.800"/><path d="M15 5v10M12 8.500h6" stroke="#fff" stroke-width="1.400"/></svg>
<svg class="b" style="left:613px;top:929px;" width="19" height="19" viewBox="0 0 19 19"><path d="M1 1H14.5L18.0 4.500V18.0H1z" fill="url(#shg2)" stroke="#4f86c6" stroke-width="1.300"/><rect x="2" y="13.8" width="15.0" height="3.500" fill="#4f86c6"/><rect x="3.0" y="14.8" width="3.4" height="1.500" fill="#e8f0fa"/><rect x="7.7" y="14.8" width="3.4" height="1.500" fill="#e8f0fa"/><rect x="12.3" y="14.8" width="3.4" height="1.500" fill="#e8f0fa"/><path d="M6.500 5v8a3 3 0 0 0 6 0V3.500a2 2 0 0 0-4 0V12a1 1 0 0 0 2 0V5" stroke="#1a2a5a" stroke-width="1.300" fill="none"/></svg>
<svg class="b" style="left:641px;top:929px;" width="18" height="20" viewBox="0 0 18 20"><path d="M6 1.500h10v17.500l-5-4.500-5 4.500z" fill="#e8f2fb" stroke="#3a80c8" stroke-width="1.300"/><path d="M4.500 0l1 3 3-0.500-2 2.300 2 2.300-3-0.500-1 3-1-3-3 0.500 2-2.300-2-2.300 3 0.500z" fill="#f8e020" stroke="#b89800" stroke-width="0.400"/></svg>
<svg class="b" style="left:675px;top:929px;" width="13" height="20" viewBox="0 0 13 20"><path d="M1.500 1h10v17.500l-5-4.500-5 4.500z" fill="#e8f2fb" stroke="#3a80c8" stroke-width="1.400"/></svg>
<svg class="b" style="left:700px;top:929px;" width="20" height="20" viewBox="0 0 20 20"><rect x="1" y="9" width="18" height="10" rx="1" fill="#dbe8f6" stroke="#4f86c6" stroke-width="1.200"/><rect x="2" y="14.500" width="16" height="3.500" fill="#4f86c6"/><rect x="4" y="15.500" width="3" height="1.400" fill="#fff"/><rect x="8.500" y="15.500" width="3" height="1.400" fill="#fff"/><rect x="13" y="15.500" width="3" height="1.400" fill="#fff"/><path d="M0.500 5.500L7.500 0v3.300c7 0 11.500 3 11.500 11.200c-2-4.500-5.500-6-11.500-5.800v3.300z" fill="#1f4e8c"/></svg>
<svg class="b" style="left:729px;top:929px;" width="20" height="20" viewBox="0 0 20 20"><rect x="1" y="9" width="18" height="10" rx="1" fill="#dbe8f6" stroke="#4f86c6" stroke-width="1.200"/><rect x="2" y="14.500" width="16" height="3.500" fill="#4f86c6"/><rect x="4" y="15.500" width="3" height="1.400" fill="#fff"/><rect x="8.500" y="15.500" width="3" height="1.400" fill="#fff"/><rect x="13" y="15.500" width="3" height="1.400" fill="#fff"/><path d="M19.500 5.500L12.500 0v3.300c-7 0-11.500 3-11.500 11.200c2-4.500 5.500-6 11.500-5.800v3.300z" fill="#1f4e8c"/></svg>
<svg class="b" style="left:758px;top:928px;" width="21" height="21" viewBox="0 0 21 21"><path d="M2 8l6-5 10 1 2 3v7l-6 5-12-3z" fill="#e4e4e4" stroke="#7a7a7a" stroke-width="0.800"/><path d="M6 4l5-3.500 8 1-3 4z" fill="#fafafa" stroke="#888" stroke-width="0.600"/><rect x="8" y="10" width="12" height="9" fill="#dbe8f6" stroke="#4f86c6" stroke-width="1.200"/><rect x="9" y="15" width="10" height="3" fill="#4f86c6"/><circle cx="5" cy="8.500" r="1" fill="#30c030"/><circle cx="7.500" cy="8.800" r="1" fill="#e03030"/><path d="M17 4l3 1v6" stroke="#222" stroke-width="1.500" fill="none"/></svg>
<svg class="b" style="left:787px;top:928px;" width="20" height="20" viewBox="0 0 20 20"><rect x="2" y="0.500" width="16" height="18" fill="#fafafa" stroke="#b0b0b0" stroke-width="0.800"/><rect x="0.500" y="2" width="19" height="7.500" rx="1" fill="#e02828"/><path d="M3 4h2.500v2h-2.500v2.500M8 4v4h1.500a2 2 0 0 0 0-4zM14 8.500v-4.500h3M14 6.300h2.500" stroke="#fff" stroke-width="1.100" fill="none"/><rect x="9" y="11.500" width="10" height="7.500" fill="#dbe8f6" stroke="#4f86c6" stroke-width="1"/><rect x="10" y="15.500" width="8" height="2.500" fill="#4f86c6"/></svg>
<svg class="b" style="left:816px;top:930px;" width="20" height="17" viewBox="0 0 20 17"><path d="M1 1H15.5L19.0 4.500V16.0H1z" fill="url(#shg2)" stroke="#4f86c6" stroke-width="1.300"/><rect x="2" y="11.8" width="16.0" height="3.500" fill="#4f86c6"/><rect x="3.0" y="12.8" width="3.7" height="1.500" fill="#e8f0fa"/><rect x="8.0" y="12.8" width="3.7" height="1.500" fill="#e8f0fa"/><rect x="13.0" y="12.8" width="3.7" height="1.500" fill="#e8f0fa"/><path d="M3 4l7 6" stroke="#b5651d" stroke-width="2.500"/><circle cx="12.500" cy="12.500" r="4" fill="#e8e8e8" stroke="#222" stroke-width="1.200"/><path d="M11.300 10.500v4l3.200-2z" fill="#222"/></svg>
<div class="b" style="left:838px;top:262px;width:1085px;height:715px;background:transparent;box-shadow:0 0 0 0 #000;"></div>
<div class="b" style="left:845px;top:268.7px;width:1071px;height:701.3px;background:#f0f0f0;box-shadow:0 2px 10px rgba(0,0,0,0.5);border-bottom:1px solid #707070;"></div>
<div class="b" style="left:844.3px;top:354px;width:1px;height:616px;background:#6e6e6e;"></div>
<div class="b" style="left:845px;top:268.7px;width:1071px;height:37.5px;background:#ffffff;"></div>
<svg class="b" style="left:855px;top:278px;" width="18.5" height="19" viewBox="0 0 18.5 19"><rect x="0" y="0" width="18" height="19" fill="#ffffff"/><rect x="0" y="0" width="1.600" height="19" fill="#0d8282"/><rect x="7.800" y="0" width="1.600" height="19" fill="#0d8282"/><rect x="15" y="0.500" width="2.300" height="18.500" fill="#0d8282"/><rect x="17.300" y="1.500" width="0.800" height="17.500" fill="#303030"/><rect x="0" y="0" width="16.500" height="1.400" fill="#0d8282"/><rect x="0" y="4.800" width="17" height="1.300" fill="#0d8282"/><path d="M2.800 3.400h4v-1l-2-1.200-2 1.200z" fill="#d8d020"/><path d="M10.600 3.400h4v-1l-2-1.200-2 1.200z" fill="#d8d020"/><rect x="3" y="8" width="3.300" height="1.100" fill="#1010a0"/><rect x="3" y="11.500" width="3.600" height="3.600" fill="#0000a0"/><rect x="2.500" y="16.500" width="1.200" height="1.200" fill="#707070"/><rect x="4.800" y="16.500" width="1.200" height="1.200" fill="#707070"/><rect x="7" y="16.500" width="1.200" height="1.800" fill="#303030"/><path d="M10.200 17.800l0.600-5 4-5.300 2.400 1.600-3.800 5.600z" fill="#181818"/><path d="M11.800 14.200l3-4.500 1.100 0.800-3 4.500z" fill="#f4f000"/><circle cx="15.700" cy="7.200" r="2.100" fill="#141414"/><circle cx="15.600" cy="6.800" r="1.100" fill="#700808"/></svg>
<div class="t" style="left:879.4px;top:278.4px;font-size:14.47px;line-height:21px;color:#000;letter-spacing:0.111px;">Layout quadros</div>
<svg class="b" style="left:1888px;top:280.5px;" width="14" height="14" viewBox="0 0 14 14"><path d="M0.500 0.500l13 13M13.500 0.500l-13 13" stroke="#000" stroke-width="1.200"/></svg>
<div class="b" style="left:845px;top:353px;width:1071px;height:1px;background:#b4b4b4;"></div>
<div class="b" style="left:845px;top:306.2px;width:92.3px;height:46.6px;background:#c3d6f3;border:1px solid #7ea4dc;"></div>
<div class="b" style="left:1149.3px;top:306.4px;width:148.5px;height:46.4px;background:#9db6e8;border:1px solid #4a7fd8;"></div>
<div class="b" style="left:939.8px;top:309px;width:1px;height:42px;background:#a0a0a0;"></div>
<div class="b" style="left:1300.3px;top:309px;width:1px;height:42px;background:#a0a0a0;"></div>
<div class="b" style="left:1598.3px;top:309px;width:1px;height:42px;background:#a0a0a0;"></div>
<div class="b" style="left:1742.7px;top:309px;width:1px;height:42px;background:#a0a0a0;"></div>
<svg class="b" style="left:881.5px;top:310px;" width="20" height="20" viewBox="0 0 20 20"><path d="M1.500 0.500c0 2.500 1 3.500 2.500 4v10.500c-1.500 0.500-2.500 1.500-2.500 4M8.500 0.500c0 2.500-1 3.500-2.500 4v10.500c1.500 0.500 2.500 1.500 2.500 4" stroke="#404040" stroke-width="1.800" fill="none"/><path d="M10 2.500h9.500M15 2.500v16.500" stroke="#404040" stroke-width="2.400" fill="none"/></svg>
<svg class="b" style="left:989px;top:310px;" width="20" height="20" viewBox="0 0 20 20"><rect x="0.700" y="0.700" width="18.600" height="18.600" fill="none" stroke="#505050" stroke-width="1.400"/><path d="M0.700 10.500h18.600M0.700 14.500h18.600" stroke="#505050" stroke-width="1.300"/><rect x="3.500" y="3.500" width="4" height="4.500" fill="none" stroke="#505050" stroke-width="1.100"/><rect x="9" y="3.500" width="4" height="4.500" fill="none" stroke="#505050" stroke-width="1.100"/><path d="M14 5.700h5" stroke="#505050" stroke-width="1.200"/><path d="M1 5.700h2.500" stroke="#505050" stroke-width="1.200"/></svg>
<svg class="b" style="left:1090.5px;top:311px;" width="20" height="19" viewBox="0 0 20 19"><rect x="4.0" y="1.0" width="3.800" height="6.500" fill="none" stroke="#606060" stroke-width="1.200"/><rect x="11.0" y="1.0" width="3.800" height="6.500" fill="none" stroke="#606060" stroke-width="1.200"/><rect x="0.6" y="11.0" width="3.800" height="6.500" fill="none" stroke="#606060" stroke-width="1.200"/><rect x="7.6" y="11.0" width="3.800" height="6.500" fill="none" stroke="#606060" stroke-width="1.200"/><rect x="14.6" y="11.0" width="3.800" height="6.500" fill="none" stroke="#606060" stroke-width="1.200"/></svg>
<svg class="b" style="left:1213.5px;top:312px;" width="20" height="17" viewBox="0 0 20 17"><path d="M0.500 1.500a1 1 0 0 1 1-1h6a1 1 0 0 1 1 1v12l-4 2.500-4-2.500z" fill="#181818"/><rect x="1.500" y="1.500" width="6" height="4" fill="#f4f4f4"/><circle cx="4.500" cy="10" r="2.700" fill="#10d020"/><g transform="translate(10.500,0)"><path d="M0.500 1.500a1 1 0 0 1 1-1h6a1 1 0 0 1 1 1v12l-4 2.500-4-2.500z" fill="#181818"/><rect x="1.500" y="1.500" width="6" height="4" fill="#f4f4f4"/><circle cx="4.500" cy="10" r="2.700" fill="#f01818"/></g></svg>
<svg class="b" style="left:1352.5px;top:310px;" width="20" height="19" viewBox="0 0 20 19"><rect x="1" y="9" width="18" height="9.500" rx="1" fill="#dbe8f6" stroke="#4f86c6" stroke-width="1.200"/><rect x="2" y="14" width="16" height="3.500" fill="#4f86c6"/><rect x="4" y="15" width="3" height="1.400" fill="#fff"/><rect x="8.500" y="15" width="3" height="1.400" fill="#fff"/><rect x="13" y="15" width="3" height="1.400" fill="#fff"/><path d="M0.500 5.500L7.500 0v3.300c7 0 11.500 3 11.500 11.200c-2-4.500-5.500-6-11.500-5.800v3.300z" fill="#1f4e8c"/></svg>
<svg class="b" style="left:1436px;top:311px;" width="19" height="19" viewBox="0 0 19 19"><rect x="0.500" y="0.500" width="14" height="3" fill="#1a2ab0"/><rect x="0.500" y="3.500" width="14" height="12" fill="#ffffff"/><path d="M0.500 3.500v12.500h10M14.500 3.500v4" stroke="#1a2ab0" stroke-width="1" stroke-dasharray="1.500 1.200" fill="none"/><path d="M10 6l0 10 2.500-2.300 1.800 4 1.700-0.800-1.800-3.800 3.300-0.300z" fill="#f0e060" stroke="#303030" stroke-width="0.800"/></svg>
<svg class="b" style="left:1524px;top:310px;" width="20" height="19" viewBox="0 0 20 19"><rect x="1" y="9" width="18" height="9.500" rx="1" fill="#dbe8f6" stroke="#4f86c6" stroke-width="1.200"/><rect x="2" y="14" width="16" height="3.500" fill="#4f86c6"/><rect x="4" y="15" width="3" height="1.400" fill="#fff"/><rect x="8.500" y="15" width="3" height="1.400" fill="#fff"/><rect x="13" y="15" width="3" height="1.400" fill="#fff"/><path d="M19.500 5.500L12.500 0v3.300c-7 0-11.500 3-11.500 11.200c2-4.500 5.500-6 11.500-5.800v3.300z" fill="#1f4e8c"/></svg>
<svg class="b" style="left:1627px;top:310px;" width="20" height="19" viewBox="0 0 20 19"><path d="M1 6h12l3 2.500v9.500H1z" fill="#e8f0f8" stroke="#2a5a94" stroke-width="1.300"/><path d="M3.500 10h8M3.500 12.500h8M3.500 15h8" stroke="#2a5a94" stroke-width="1.100"/><path d="M7 7l6-5.500 4 0.500-3 4.500-3.500 3z" fill="#c8d8ea" stroke="#2a5a94" stroke-width="0.900"/><path d="M15 0.500h4.500v6l-2.500-2z" fill="#102850"/></svg>
<svg class="b" style="left:1696px;top:310px;" width="14" height="19" viewBox="0 0 14 19"><rect x="0.500" y="0.500" width="13" height="4" rx="1.500" fill="#1f6fc0"/><rect x="0.500" y="7.500" width="13" height="4" rx="1.500" fill="#1f6fc0"/><rect x="0.500" y="14.500" width="13" height="4" rx="1.500" fill="#1f6fc0"/><path d="M1 1.500h12M1 8.500h12M1 15.500h12" stroke="#58a8e8" stroke-width="1"/></svg>
<svg class="b" style="left:1769px;top:312px;" width="17" height="17" viewBox="0 0 17 17"><path d="M1 1.500l14 13M15.500 1L1.500 15" stroke="#000" stroke-width="2.200"/><path d="M15 15l1.500 1.500" stroke="#000" stroke-width="1"/></svg>
<div class="t" style="left:850.4px;top:331.3px;font-size:14.47px;line-height:21px;color:#000;letter-spacing:-0.202px;">Ferramentas</div>
<div class="t" style="left:953.3px;top:331.3px;font-size:14.47px;line-height:21px;color:#000;letter-spacing:0.573px;">Modo quadro</div>
<div class="t" style="left:1056.5px;top:331.3px;font-size:14.47px;line-height:21px;color:#000;letter-spacing:0.696px;">Modo global</div>
<div class="t" style="left:1154.0px;top:331.3px;font-size:14.47px;line-height:21px;color:#000;letter-spacing:0.336px;">Quadro de comando</div>
<div class="t" style="left:1314.3px;top:331.3px;font-size:14.47px;line-height:21px;color:#000;letter-spacing:0.049px;">Folha para trás</div>
<div class="t" style="left:1423.3px;top:331.3px;font-size:14.47px;line-height:21px;color:#000;letter-spacing:0.116px;">Oculta</div>
<div class="t" style="left:1477.3px;top:331.3px;font-size:14.47px;line-height:21px;color:#000;letter-spacing:0.156px;">Folha para frente</div>
<div class="t" style="left:1612.3px;top:331.3px;font-size:14.47px;line-height:21px;color:#000;letter-spacing:-0.094px;">Opções</div>
<div class="t" style="left:1673.3px;top:331.3px;font-size:14.47px;line-height:21px;color:#000;letter-spacing:0.549px;">Utilidade</div>
<div class="t" style="left:1756.0px;top:331.3px;font-size:14.47px;line-height:21px;color:#000;letter-spacing:-0.407px;">Fechar</div>
<div class="b" style="left:846.5px;top:355.5px;width:246px;height:612px;background:#f0f0f0;border:1px solid #828282;box-shadow:inset 1px 1px 0 #ffffff, inset -1px -1px 0 #ffffff;border-right-color:#a0a0a0;border-bottom-color:#a0a0a0;"></div>
<div class="b" style="left:849.5px;top:359px;width:240.8px;height:26.3px;background:#fffaf0;border-right:1.2px solid #a0a0a0;border-bottom:1.6px solid #a0a0a0;"></div>
<div class="t" style="left:856.3px;top:365.8px;font-size:14.47px;line-height:21px;color:#000;letter-spacing:0.084px;font-weight:bold;">Ferramentas</div>
<svg class="b" style="left:1067px;top:363px;" width="14" height="13" viewBox="0 0 14 13"><path d="M0.800 0.800l11 10.500" stroke="#000" stroke-width="1.400"/><path d="M12.500 0.500L1.500 11.500" stroke="#000" stroke-width="2.200"/><rect x="12" y="12" width="1.200" height="1.200" fill="#000"/></svg>
<div class="b" style="left:850.2px;top:385.7px;width:239.8px;height:23.600000000000023px;background:#f0f0f0;border-left:1px solid #a0a0a0;border-top:1px solid #a8a8a8;border-bottom:2.400px solid #ffffff;"></div>
<div class="t" style="left:851.3px;top:386.5px;font-size:14.47px;line-height:21px;color:#000;letter-spacing:-0.276px;">Estrutura</div>
<div class="b" style="left:850.2px;top:462.2px;width:239.8px;height:25.0px;background:#f0f0f0;border-left:1px solid #a0a0a0;border-top:1px solid #a8a8a8;border-bottom:2.400px solid #ffffff;"></div>
<div class="t" style="left:851.3px;top:463.6px;font-size:14.47px;line-height:21px;color:#000;letter-spacing:-0.080px;">canaletas</div>
<div class="b" style="left:850.2px;top:591.4px;width:239.8px;height:24.399999999999977px;background:#f0f0f0;border-left:1px solid #a0a0a0;border-top:1px solid #a8a8a8;border-bottom:2.400px solid #ffffff;"></div>
<div class="t" style="left:851.3px;top:592.2px;font-size:14.47px;line-height:21px;color:#000;letter-spacing:-0.113px;">Trilhos</div>
<div class="b" style="left:850.2px;top:719.7px;width:239.8px;height:25.0px;background:#f0f0f0;border-left:1px solid #a0a0a0;border-top:1px solid #a8a8a8;border-bottom:2.400px solid #ffffff;"></div>
<div class="t" style="left:851.3px;top:720.4px;font-size:14.47px;line-height:21px;color:#000;letter-spacing:0.169px;">Barras de distribuição</div>
<div class="b" style="left:850.2px;top:849.2px;width:239.8px;height:24.399999999999977px;background:#f0f0f0;border-left:1px solid #a0a0a0;border-top:1px solid #a8a8a8;border-bottom:2.400px solid #ffffff;"></div>
<div class="t" style="left:851.3px;top:849.9px;font-size:14.47px;line-height:21px;color:#000;letter-spacing:-0.175px;">Elevação</div>
<div class="b" style="left:851.2px;top:409.9px;width:237.7px;height:50.30000000000001px;background:#e1e1e1;border:1px solid #adadad;"></div>
<div class="t" style="left:899.5px;top:426.9px;font-size:14.47px;line-height:21px;color:#000;letter-spacing:0.169px;">Inserir moldura ou estrutura</div>
<svg class="b" style="left:864.7px;top:426px;" width="21" height="20" viewBox="0 0 21 20"><rect x="0.500" y="0.500" width="19.500" height="19" rx="2.500" fill="#22a82c" stroke="#158a20" stroke-width="1"/><rect x="1.500" y="1.500" width="17.500" height="8" rx="2" fill="#4cc850" opacity="0.600"/><path d="M4 10h11M10.500 5l5 5-5 5" stroke="#fff" stroke-width="2" fill="none"/></svg>
<div class="b" style="left:851.2px;top:487.9px;width:237.7px;height:49.200000000000045px;background:#e1e1e1;border:1px solid #adadad;"></div>
<div class="t" style="left:899.5px;top:504.0px;font-size:14.47px;line-height:21px;color:#000;letter-spacing:-0.067px;">Desenhar canaleta</div>
<svg class="b" style="left:854.5px;top:497.0px;" width="41" height="32" viewBox="0 0 41 32"><path d="M0 4h40l-5 4H0z" fill="#f8f8f8" stroke="#404040" stroke-width="0.900"/><path d="M0 8h35v14H0" fill="#e8e8e8" stroke="#606060" stroke-width="0.800"/><path d="M0 22h35l5 4H0z" fill="#fafafa" stroke="#404040" stroke-width="0.900"/><g transform="translate(6,7)"><path d="M0 3l6-3.500 5 4-5 4z" fill="#e8b450"/><path d="M6 7.500l5-4 5 3-4 5z" fill="#7ab0e0"/><path d="M12 11.500l4-5 18 10c2 1.500 2 4-1 4.500z" fill="#3c9a30" stroke="#1d6a18" stroke-width="0.800"/><path d="M17 9l14 8.500" stroke="#9ad890" stroke-width="1.200"/></g></svg>
<div class="b" style="left:851.2px;top:540.5px;width:237.7px;height:48.60000000000002px;background:#e1e1e1;border:1px solid #adadad;"></div>
<div class="t" style="left:899.5px;top:556.1px;font-size:14.47px;line-height:21px;color:#000;letter-spacing:0.027px;">Caracterizar à canaleta</div>
<svg class="b" style="left:854.5px;top:548.3px;" width="41" height="33" viewBox="0 0 41 33"><path d="M0 4h40l-5 4H0z" fill="#f8f8f8" stroke="#404040" stroke-width="0.900"/><path d="M0 8h35v14H0" fill="#e8e8e8" stroke="#606060" stroke-width="0.800"/><path d="M0 22h35l5 4H0z" fill="#fafafa" stroke="#404040" stroke-width="0.900"/><path d="M7 0h7v12h-7z" fill="#e06a70"/><path d="M6 18l1 13 3.500-4 3.500 4 1-13z" fill="#e06a70"/><path d="M10.500 3l3 8 8.500 0.500-6.500 5.500 2.500 8.500-7.500-5-7.500 5 2.500-8.500L-1 11.500l8.500-0.500z" fill="#f0e414" stroke="#b8a800" stroke-width="0.600"/></svg>
<div class="b" style="left:851.2px;top:616.4px;width:237.7px;height:48.60000000000002px;background:#e1e1e1;border:1px solid #adadad;"></div>
<div class="t" style="left:899.5px;top:632.0px;font-size:14.47px;line-height:21px;color:#000;letter-spacing:-0.035px;">Desenhar guia</div>
<svg class="b" style="left:854.5px;top:626.2px;" width="41" height="32" viewBox="0 0 41 32"><path d="M0 6h40l-4 3.500H0zM0 10.500h36l-4 3H0zM0 14.500h32l4 3H0zM0 19h36l4 3.500H0z" fill="#303030"/><path d="M0 9.800h36M0 14h32M0 18h36" stroke="#909090" stroke-width="0.800"/><g transform="translate(6,7)"><path d="M0 3l6-3.500 5 4-5 4z" fill="#e8b450"/><path d="M6 7.500l5-4 5 3-4 5z" fill="#7ab0e0"/><path d="M12 11.500l4-5 18 10c2 1.500 2 4-1 4.500z" fill="#3c9a30" stroke="#1d6a18" stroke-width="0.800"/><path d="M17 9l14 8.500" stroke="#9ad890" stroke-width="1.200"/></g></svg>
<div class="b" style="left:851.2px;top:668.4px;width:237.7px;height:49.200000000000045px;background:#e1e1e1;border:1px solid #adadad;"></div>
<div class="t" style="left:899.5px;top:684.9px;font-size:14.47px;line-height:21px;color:#000;letter-spacing:0.001px;">Estender canal.o guia</div>
<svg class="b" style="left:854.5px;top:678.0px;" width="41" height="30" viewBox="0 0 41 30"><path d="M0 3h22l-3 3.500H0z" fill="#fafafa" stroke="#404040" stroke-width="0.800"/><path d="M0 6.500h19v16H0" fill="#e8e8e8" stroke="#808080" stroke-width="0.700"/><path d="M0 22.500h19l3 3.500H0z" fill="#fafafa" stroke="#404040" stroke-width="0.800"/><path d="M22 3h17l-3 3.500h-17zM19 6.500h17v16h-17zM19 22.500h17l3 3.500h-17z" fill="#80e880" stroke="#208020" stroke-width="0.800" stroke-dasharray="1.500 1.200"/><path d="M10 12.500h20v-4l10 6-10 6v-4H10z" fill="#0a0a50"/></svg>
<div class="b" style="left:851.2px;top:745.3px;width:237.7px;height:49.200000000000045px;background:#e1e1e1;border:1px solid #adadad;"></div>
<div class="t" style="left:899.5px;top:760.9px;font-size:14.47px;line-height:21px;color:#000;letter-spacing:-0.105px;">Desenhar barras</div>
<svg class="b" style="left:854.5px;top:749.5px;" width="41" height="40" viewBox="0 0 41 40"><path d="M0.5 39V12l3-3V1h7.500v8l1.500 3v27z" fill="#c8560c" stroke="#5a2404" stroke-width="1"/><rect x="5.0" y="2.500" width="4.500" height="5" fill="#8a3a06"/><path d="M5.7 5h3" stroke="#f0a060" stroke-width="1"/><path d="M15.0 39V12l3-3V1h7.500v8l1.500 3v27z" fill="#c8560c" stroke="#5a2404" stroke-width="1"/><rect x="19.5" y="2.500" width="4.500" height="5" fill="#8a3a06"/><path d="M20.2 5h3" stroke="#f0a060" stroke-width="1"/><path d="M29.0 39V12l3-3V1h7.500v8l1.500 3v27z" fill="#c8560c" stroke="#5a2404" stroke-width="1"/><rect x="33.5" y="2.500" width="4.500" height="5" fill="#8a3a06"/><path d="M34.2 5h3" stroke="#f0a060" stroke-width="1"/></svg>
<div class="b" style="left:851.2px;top:797.3px;width:237.7px;height:49.80000000000007px;background:#e1e1e1;border:1px solid #adadad;"></div>
<div class="t" style="left:899.5px;top:813.8px;font-size:14.47px;line-height:21px;color:#000;letter-spacing:0.039px;">Editar barras</div>
<svg class="b" style="left:863.5px;top:802.5px;" width="29" height="40" viewBox="0 0 29 40"><path d="M0.500 39V1h9v38z" fill="#c8560c" stroke="#5a2404" stroke-width="1"/><rect x="3" y="3" width="4.500" height="7" fill="#8a3a06"/><path d="M4 25l19-19 3 3-19 19-4 1z" fill="#f4c020" stroke="#a07800" stroke-width="0.700"/><path d="M23 6l1.500-1.500 3 3L26 9z" fill="#2080f0"/></svg>
<div class="b" style="left:856px;top:878.3px;width:119.8px;height:27.3px;background:#e1e1e1;border:1px solid #adadad;"></div>
<div class="t" style="left:860.2px;top:882.4px;font-size:14.47px;line-height:21px;color:#000;letter-spacing:-0.193px;">Usuário</div>
<svg class="b" style="left:960.5px;top:889.5px;" width="10" height="6" viewBox="0 0 10 6"><path d="M0.500 0.500L5.0 5.0L9.5 0.500" stroke="#404040" stroke-width="1.100" fill="none"/></svg>
<div class="b" style="left:985.7px;top:878px;width:92.5px;height:26.2px;background:#ffffff;border:1px solid #7a7a7a;"></div>
<div class="t" style="left:1022.3px;top:881.8px;font-size:14.47px;line-height:21px;color:#000;letter-spacing:-0.054px;">120 mm</div>
<div class="t" style="left:1106.3px;top:366.2px;font-size:14.47px;line-height:21px;color:#000;letter-spacing:0.051px;">Localização:</div>
<div class="b" style="left:1106.3px;top:385.7px;width:255.4px;height:27px;background:#e1e1e1;border:1px solid #adadad;"></div>
<div class="t" style="left:1111.4px;top:390.1px;font-size:14.47px;line-height:21px;color:#000;letter-spacing:-0.500px;">+P1</div>
<svg class="b" style="left:1346.5px;top:397.5px;" width="10" height="6" viewBox="0 0 10 6"><path d="M0.500 0.500L5.0 5.0L9.5 0.500" stroke="#404040" stroke-width="1.100" fill="none"/></svg>
<div class="t" style="left:1106.3px;top:425.2px;font-size:14.47px;line-height:21px;color:#000;letter-spacing:-0.330px;">Colunas:</div>
<div class="b" style="left:1230.9px;top:420.3px;width:69px;height:25.3px;background:#fff;border:1px solid #7a7a7a;"></div>
<div class="t" style="left:1289.0px;top:423.8px;font-size:14.47px;line-height:21px;color:#000;letter-spacing:-0.217px;">4</div>
<div class="b" style="left:1301.2px;top:421.5px;width:21.5px;height:10.8px;background:#f0f0f0;border:1px solid #c4c4c4;"></div>
<div class="b" style="left:1301.2px;top:433.7px;width:21.5px;height:10.8px;background:#f0f0f0;border:1px solid #c4c4c4;"></div>
<svg class="b" style="left:1308.45px;top:424.9px;" width="7" height="4" viewBox="0 0 7 4"><path d="M0 4h7L3.500 0z" fill="#000"/></svg>
<svg class="b" style="left:1308.45px;top:437.09999999999997px;" width="7" height="4" viewBox="0 0 7 4"><path d="M0 0h7L3.500 4z" fill="#000"/></svg>
<div class="t" style="left:1106.3px;top:455.0px;font-size:14.47px;line-height:21px;color:#000;letter-spacing:-0.510px;">Linhas:</div>
<div class="b" style="left:1106.3px;top:470.9px;width:7px;height:1px;background:#000;"></div>
<div class="b" style="left:1230.9px;top:450.4px;width:69px;height:25.3px;background:#fff;border:1px solid #7a7a7a;"></div>
<div class="t" style="left:1289.0px;top:453.9px;font-size:14.47px;line-height:21px;color:#000;letter-spacing:-0.217px;">4</div>
<div class="b" style="left:1301.2px;top:451.6px;width:21.5px;height:10.8px;background:#f0f0f0;border:1px solid #c4c4c4;"></div>
<div class="b" style="left:1301.2px;top:463.8px;width:21.5px;height:10.8px;background:#f0f0f0;border:1px solid #c4c4c4;"></div>
<svg class="b" style="left:1308.45px;top:455.0px;" width="7" height="4" viewBox="0 0 7 4"><path d="M0 4h7L3.500 0z" fill="#000"/></svg>
<svg class="b" style="left:1308.45px;top:467.2px;" width="7" height="4" viewBox="0 0 7 4"><path d="M0 0h7L3.500 4z" fill="#000"/></svg>
<div class="t" style="left:1106.3px;top:490.0px;font-size:14.47px;line-height:21px;color:#000;letter-spacing:0.051px;">Largura da célula:</div>
<div class="b" style="left:1106.3px;top:505.9px;width:7px;height:1px;background:#000;"></div>
<div class="b" style="left:1230.9px;top:485.1px;width:114px;height:25.3px;background:#fff;border:1px solid #7a7a7a;"></div>
<div class="t" style="left:1288.5px;top:488.6px;font-size:14.47px;line-height:21px;color:#000;letter-spacing:0.126px;">200 mm</div>
<div class="b" style="left:1346.2px;top:486.3px;width:21.5px;height:10.8px;background:#f0f0f0;border:1px solid #c4c4c4;"></div>
<div class="b" style="left:1346.2px;top:498.5px;width:21.5px;height:10.8px;background:#f0f0f0;border:1px solid #c4c4c4;"></div>
<svg class="b" style="left:1353.45px;top:489.7px;" width="7" height="4" viewBox="0 0 7 4"><path d="M0 4h7L3.500 0z" fill="#000"/></svg>
<svg class="b" style="left:1353.45px;top:501.9px;" width="7" height="4" viewBox="0 0 7 4"><path d="M0 0h7L3.500 4z" fill="#000"/></svg>
<div class="t" style="left:1106.3px;top:520.3px;font-size:14.47px;line-height:21px;color:#000;letter-spacing:0.196px;">Altura da célula:</div>
<div class="b" style="left:1106.3px;top:536.2px;width:9.5px;height:1px;background:#000;"></div>
<div class="b" style="left:1230.9px;top:515.2px;width:114px;height:25.3px;background:#fff;border:1px solid #7a7a7a;"></div>
<div class="t" style="left:1288.5px;top:518.7px;font-size:14.47px;line-height:21px;color:#000;letter-spacing:0.126px;">200 mm</div>
<div class="b" style="left:1346.2px;top:516.4px;width:21.5px;height:10.8px;background:#f0f0f0;border:1px solid #c4c4c4;"></div>
<div class="b" style="left:1346.2px;top:528.5999999999999px;width:21.5px;height:10.8px;background:#f0f0f0;border:1px solid #c4c4c4;"></div>
<svg class="b" style="left:1353.45px;top:519.8px;" width="7" height="4" viewBox="0 0 7 4"><path d="M0 4h7L3.500 0z" fill="#000"/></svg>
<svg class="b" style="left:1353.45px;top:531.9999999999999px;" width="7" height="4" viewBox="0 0 7 4"><path d="M0 0h7L3.500 4z" fill="#000"/></svg>
<div class="b" style="left:1105.7px;top:557.3px;width:16px;height:15.6px;background:#fff;border:1px solid #333;"></div>
<div class="t" style="left:1126.3px;top:556.1px;font-size:14.47px;line-height:21px;color:#000;letter-spacing:0.169px;">Apenas componentes predispostos</div>
<div class="b" style="left:1095.3px;top:586.3px;width:277px;height:321.5px;background:#ffffff;border:1px solid #828790;"></div>
<div class="t" style="left:1103.0px;top:592.1px;font-size:14.47px;line-height:21px;color:#000;letter-spacing:0.031px;">Sigla</div>
<div class="t" style="left:1228.0px;top:592.1px;font-size:14.47px;line-height:21px;color:#000;letter-spacing:-0.016px;">Descrição</div>
<div class="b" style="left:1221.5px;top:588px;width:1px;height:25px;background:#e5e5e5;"></div>
<div class="b" style="left:1350.4px;top:587.3px;width:21px;height:299px;background:#f0f0f0;"></div>
<div class="b" style="left:1352px;top:677px;width:17.5px;height:188px;background:#cdcdcd;"></div>
<svg class="b" style="left:1355.5px;top:596.5px;" width="10" height="6" viewBox="0 0 10 6"><path d="M0.500 5.500L5 1l4.500 4.500" stroke="#555555" stroke-width="1.800" fill="none"/></svg>
<svg class="b" style="left:1355.5px;top:872px;" width="10" height="6" viewBox="0 0 10 6"><path d="M0.500 0.500L5 5l4.500-4.500" stroke="#555555" stroke-width="1.800" fill="none"/></svg>
<div class="b" style="left:1097.3px;top:638.3px;width:252.5px;height:23.4px;background:#cce8ff;"></div>
<div class="b" style="left:1096.3px;top:587.3px;width:254px;height:300px;overflow:hidden;"><svg class="b" style="left:5.2000000000000455px;top:29.40000000000009px;" width="19" height="19" viewBox="0 0 19 19"><circle cx="9.500" cy="9.500" r="8.400" fill="url(#redled)" stroke="#2c2c2c" stroke-width="1.700"/><circle cx="9.500" cy="9.500" r="9.300" fill="none" stroke="#9a9a9a" stroke-width="0.600"/></svg>
<div class="t" style="left:27.2px;top:29.2px;font-size:13.37px;line-height:21px;color:#000;letter-spacing:-0.500px;">P1</div>
<svg class="b" style="left:5.2000000000000455px;top:53.40000000000009px;" width="19" height="19" viewBox="0 0 19 19"><circle cx="9.500" cy="9.500" r="8.400" fill="url(#redled)" stroke="#2c2c2c" stroke-width="1.700"/><circle cx="9.500" cy="9.500" r="9.300" fill="none" stroke="#9a9a9a" stroke-width="0.600"/></svg>
<div class="t" style="left:27.2px;top:53.2px;font-size:13.37px;line-height:21px;color:#000;letter-spacing:-0.500px;">P2</div>
<svg class="b" style="left:5.2000000000000455px;top:77.40000000000009px;" width="19" height="19" viewBox="0 0 19 19"><circle cx="9.500" cy="9.500" r="8.400" fill="url(#redled)" stroke="#2c2c2c" stroke-width="1.700"/><circle cx="9.500" cy="9.500" r="9.300" fill="none" stroke="#9a9a9a" stroke-width="0.600"/></svg>
<div class="t" style="left:27.2px;top:77.2px;font-size:13.37px;line-height:21px;color:#000;letter-spacing:-0.500px;">P3</div>
<svg class="b" style="left:5.2000000000000455px;top:101.40000000000009px;" width="19" height="19" viewBox="0 0 19 19"><circle cx="9.500" cy="9.500" r="8.400" fill="url(#redled)" stroke="#2c2c2c" stroke-width="1.700"/><circle cx="9.500" cy="9.500" r="9.300" fill="none" stroke="#9a9a9a" stroke-width="0.600"/></svg>
<div class="t" style="left:27.2px;top:101.2px;font-size:13.37px;line-height:21px;color:#000;letter-spacing:-0.500px;">S3</div>
<div class="t" style="left:131.7px;top:101.2px;font-size:14.07px;line-height:21px;color:#000;letter-spacing:-0.566px;">EMERGÊNCIA</div>
<svg class="b" style="left:5.2000000000000455px;top:125.40000000000009px;" width="19" height="19" viewBox="0 0 19 19"><circle cx="9.500" cy="9.500" r="8.400" fill="url(#redled)" stroke="#2c2c2c" stroke-width="1.700"/><circle cx="9.500" cy="9.500" r="9.300" fill="none" stroke="#9a9a9a" stroke-width="0.600"/></svg>
<div class="t" style="left:27.2px;top:125.2px;font-size:13.37px;line-height:21px;color:#000;letter-spacing:-0.500px;">S5</div>
<div class="t" style="left:131.7px;top:125.2px;font-size:13.37px;line-height:21px;color:#000;letter-spacing:-1.144px;">RESET</div>
<svg class="b" style="left:5.2000000000000455px;top:149.4000000000001px;" width="19" height="19" viewBox="0 0 19 19"><circle cx="9.500" cy="9.500" r="8.400" fill="url(#redled)" stroke="#2c2c2c" stroke-width="1.700"/><circle cx="9.500" cy="9.500" r="9.300" fill="none" stroke="#9a9a9a" stroke-width="0.600"/></svg>
<div class="t" style="left:27.2px;top:149.2px;font-size:14.07px;line-height:21px;color:#000;letter-spacing:-0.500px;">S19</div>
<div class="t" style="left:131.7px;top:149.2px;font-size:14.47px;line-height:21px;color:#000;letter-spacing:-0.463px;">INÍCIO DO CICLO</div>
<svg class="b" style="left:5.2000000000000455px;top:173.4000000000001px;" width="19" height="19" viewBox="0 0 19 19"><circle cx="9.500" cy="9.500" r="8.400" fill="url(#redled)" stroke="#2c2c2c" stroke-width="1.700"/><circle cx="9.500" cy="9.500" r="9.300" fill="none" stroke="#9a9a9a" stroke-width="0.600"/></svg>
<div class="t" style="left:27.2px;top:173.2px;font-size:14.37px;line-height:21px;color:#000;letter-spacing:-0.500px;">S20</div>
<div class="t" style="left:131.7px;top:173.2px;font-size:14.47px;line-height:21px;color:#000;letter-spacing:-0.598px;">FIM DO CICLO</div>
<svg class="b" style="left:5.2000000000000455px;top:197.4000000000001px;" width="19" height="19" viewBox="0 0 19 19"><circle cx="9.500" cy="9.500" r="8.400" fill="url(#redled)" stroke="#2c2c2c" stroke-width="1.700"/><circle cx="9.500" cy="9.500" r="9.300" fill="none" stroke="#9a9a9a" stroke-width="0.600"/></svg>
<div class="t" style="left:27.2px;top:197.2px;font-size:14.37px;line-height:21px;color:#000;letter-spacing:-0.500px;">S33</div>
<div class="t" style="left:131.7px;top:197.2px;font-size:14.47px;line-height:21px;color:#000;letter-spacing:-0.544px;">EJETOR DA MÃO</div>
<svg class="b" style="left:5.2000000000000455px;top:221.4000000000001px;" width="19" height="19" viewBox="0 0 19 19"><circle cx="9.500" cy="9.500" r="8.400" fill="url(#redled)" stroke="#2c2c2c" stroke-width="1.700"/><circle cx="9.500" cy="9.500" r="9.300" fill="none" stroke="#9a9a9a" stroke-width="0.600"/></svg>
<div class="t" style="left:27.2px;top:221.2px;font-size:14.37px;line-height:21px;color:#000;letter-spacing:-0.500px;">S34</div>
<div class="t" style="left:131.7px;top:221.2px;font-size:14.47px;line-height:21px;color:#000;letter-spacing:-0.322px;">ROTAÇÃO DIREITA</div>
<svg class="b" style="left:5.2000000000000455px;top:245.4000000000001px;" width="19" height="19" viewBox="0 0 19 19"><circle cx="9.500" cy="9.500" r="8.400" fill="url(#redled)" stroke="#2c2c2c" stroke-width="1.700"/><circle cx="9.500" cy="9.500" r="9.300" fill="none" stroke="#9a9a9a" stroke-width="0.600"/></svg>
<div class="t" style="left:27.2px;top:245.2px;font-size:14.37px;line-height:21px;color:#000;letter-spacing:-0.500px;">S35</div>
<div class="t" style="left:131.7px;top:245.2px;font-size:13.77px;line-height:21px;color:#000;letter-spacing:-0.540px;">ROTAÇÃO À ESQUERDA</div>
<svg class="b" style="left:5.2000000000000455px;top:269.4000000000001px;" width="19" height="19" viewBox="0 0 19 19"><circle cx="9.500" cy="9.500" r="8.400" fill="url(#redled)" stroke="#2c2c2c" stroke-width="1.700"/><circle cx="9.500" cy="9.500" r="9.300" fill="none" stroke="#9a9a9a" stroke-width="0.600"/></svg>
<div class="t" style="left:27.2px;top:269.2px;font-size:14.37px;line-height:21px;color:#000;letter-spacing:-0.500px;">S36</div>
<div class="t" style="left:131.7px;top:269.2px;font-size:14.37px;line-height:21px;color:#000;letter-spacing:-0.555px;">ASPIRADOR</div></div>
<div class="b" style="left:1096.3px;top:887.3px;width:275px;height:19.5px;background:#f0f0f0;"></div>
<div class="b" style="left:1117.8px;top:888.8px;width:142px;height:16.5px;background:#cdcdcd;"></div>
<svg class="b" style="left:1104px;top:891.5px;" width="6" height="10" viewBox="0 0 6 10"><path d="M5.500 0.500L1 5l4.500 4.500" stroke="#555555" stroke-width="1.800" fill="none"/></svg>
<svg class="b" style="left:1336.5px;top:891.5px;" width="6" height="10" viewBox="0 0 6 10"><path d="M0.500 0.500L5 5L0.500 9.500" stroke="#555555" stroke-width="1.800" fill="none"/></svg>
<div class="b" style="left:1373.5px;top:355px;width:4.5px;height:553px;background:#c4c4c4;"></div>
<div class="b" style="left:1105.2px;top:925.3px;width:159.4px;height:28.1px;background:#e1e1e1;border:1px solid #adadad;overflow:hidden;"><div class="t" style="left:-3.0px;top:3.0px;font-size:14.47px;line-height:21px;color:#000;letter-spacing:0.119px;">Preferências do desenho</div></div>
<div class="b" style="left:1288px;top:920.2px;width:39px;height:39px;background:radial-gradient(circle at 45% 40%,#34363a 0%,#232427 60%,#18191b 100%);border-radius:50%;"></div>
<div class="t" style="left:1344.2px;top:933.0px;font-size:14.47px;line-height:21px;color:#000;letter-spacing:0.213px;">Arraste para inserir a tampa no quadro</div>
<div class="b" style="left:1765.3px;top:925.3px;width:30px;height:28.1px;background:#e1e1e1;border:1px solid #adadad;"></div>
<svg class="b" style="left:1776.5px;top:938px;" width="8" height="5" viewBox="0 0 8 5"><path d="M0 0h7.400L3.700 4.200z" fill="#000"/></svg>
<div class="b" style="left:1801.1px;top:925.3px;width:102.6px;height:28.7px;background:#e1e1e1;border:2px solid #0078d7;"></div>
<div class="b" style="left:1803.8px;top:928px;width:97.2px;height:23.3px;background:transparent;border:1px dotted #000;"></div>
<div class="t" style="left:1823.5px;top:930.2px;font-size:14.47px;line-height:21px;color:#000;letter-spacing:0.263px;">Atualizar</div>
<div class="b" style="left:1378px;top:354px;width:1537.5px;height:554px;background:#ffffff;width:537.5px;"></div>
<div class="b" style="left:1381.7px;top:366.5px;width:531px;height:531.2px;background:#808080;"></div>
<div class="b" style="left:1385px;top:370px;width:128.3px;height:128.1px;background:#ffffff;"></div>
<div class="b" style="left:1516.9px;top:370px;width:128.3px;height:128.1px;background:#ffffff;"></div>
<div class="b" style="left:1648.9px;top:370px;width:128.3px;height:128.1px;background:#ffffff;"></div>
<div class="b" style="left:1781px;top:370px;width:128.3px;height:128.1px;background:#ffffff;"></div>
<div class="b" style="left:1385px;top:501.5px;width:128.3px;height:128.1px;background:#ffffff;"></div>
<div class="b" style="left:1516.9px;top:501.5px;width:128.3px;height:128.1px;background:#ffffff;"></div>
<div class="b" style="left:1648.9px;top:501.5px;width:128.3px;height:128.1px;background:#ffffff;"></div>
<div class="b" style="left:1781px;top:501.5px;width:128.3px;height:128.1px;background:#ffffff;"></div>
<div class="b" style="left:1385px;top:633.6px;width:128.3px;height:128.1px;background:#ffffff;"></div>
<div class="b" style="left:1516.9px;top:633.6px;width:128.3px;height:128.1px;background:#ffffff;"></div>
<div class="b" style="left:1648.9px;top:633.6px;width:128.3px;height:128.1px;background:#ffffff;"></div>
<div class="b" style="left:1781px;top:633.6px;width:128.3px;height:128.1px;background:#ffffff;"></div>
<div class="b" style="left:1385px;top:765.8px;width:128.3px;height:128.1px;background:#ffffff;"></div>
<div class="b" style="left:1516.9px;top:765.8px;width:128.3px;height:128.1px;background:#ffffff;"></div>
<div class="b" style="left:1648.9px;top:765.8px;width:128.3px;height:128.1px;background:#ffffff;"></div>
<div class="b" style="left:1781px;top:765.8px;width:128.3px;height:128.1px;background:#ffffff;"></div>
<svg class="b" style="left:0;top:0" width="1920" height="900" viewBox="0 0 1920 900"><defs><linearGradient id="ringg" x1="0" y1="0" x2="1" y2="1"><stop offset="0" stop-color="#b4b4c2"/><stop offset="0.500" stop-color="#9c9cac"/><stop offset="1" stop-color="#b0b0be"/></linearGradient><linearGradient id="pilg" x1="0" y1="0.300" x2="1" y2="0.100"><stop offset="0" stop-color="#e0e0e4"/><stop offset="0.600" stop-color="#d0d0d6"/><stop offset="0.850" stop-color="#b4b4bc"/><stop offset="1" stop-color="#8c8c94"/></linearGradient><linearGradient id="metg" x1="0" y1="0" x2="1" y2="1"><stop offset="0" stop-color="#d4d8e4"/><stop offset="0.500" stop-color="#eceef4"/><stop offset="1" stop-color="#d8dae4"/></linearGradient><radialGradient id="selg" cx="0.500" cy="0.450" r="0.600"><stop offset="0" stop-color="#0c0c0e"/><stop offset="0.700" stop-color="#18181a"/><stop offset="1" stop-color="#303034"/></radialGradient><linearGradient id="selw" x1="0" y1="0" x2="0" y2="1"><stop offset="0" stop-color="#f8f8f8"/><stop offset="0.700" stop-color="#d8d8d8"/><stop offset="1" stop-color="#909090"/></linearGradient><radialGradient id="mushg" cx="0.450" cy="0.400" r="0.700"><stop offset="0" stop-color="#b32226"/><stop offset="0.600" stop-color="#a81e22"/><stop offset="1" stop-color="#9a181c"/></radialGradient><radialGradient id="blkg" cx="0.500" cy="0.450" r="0.600"><stop offset="0" stop-color="#2a2b2f"/><stop offset="0.700" stop-color="#242528"/><stop offset="1" stop-color="#1c1d20"/></radialGradient></defs><ellipse cx="1450.3" cy="442.3" rx="36.800" ry="39.400" fill="#8f1519"/><ellipse cx="1450.6" cy="440.5" rx="36" ry="37.300" fill="url(#mushg)"/><path d="M1430.7 442.1a20 20 0 1 1 25.500 22.300" fill="none" stroke="#931519" stroke-width="6.200" stroke-linecap="round"/><path d="M1429.8 438.8a22.500 22.500 0 0 1 40 2" fill="none" stroke="#b8282c" stroke-width="0.900" opacity="0.700"/><path d="M1454.9 455.9L1441.9 464.1L1454.1 473.7z" fill="#931519"/><rect x="1524.1" y="411.1" width="114.800" height="63" rx="4" fill="#2b2b2d"/><rect x="1527.5" y="414.6" width="108" height="56" rx="3" fill="none" stroke="#3a3a3c" stroke-width="2"/><rect x="1539.6" y="426.2" width="83.700" height="32.300" fill="#a5b947"/><g transform="translate(1546.4,431.3)"><path d="M3.2 0h10.800l-2.600 22.500h-10.800zM1.9 11.200h10.800" fill="none" stroke="#23281a" stroke-width="2.300"/><rect x="-4.0" y="21" width="2.500" height="2.500" fill="#23281a"/><path d="M21.5 0h10.800l-2.600 22.500h-10.800zM20.2 11.200h10.800" fill="none" stroke="#23281a" stroke-width="2.300"/><rect x="14.3" y="21" width="2.500" height="2.500" fill="#23281a"/><path d="M42.8 0h10.800l-2.600 22.500h-10.800zM41.5 11.200h10.800" fill="none" stroke="#23281a" stroke-width="2.300"/><rect x="35.6" y="21" width="2.500" height="2.500" fill="#23281a"/><path d="M61.1 0h10.800l-2.600 22.500h-10.800zM59.8 11.200h10.800" fill="none" stroke="#23281a" stroke-width="2.300"/><rect x="53.9" y="21" width="2.500" height="2.500" fill="#23281a"/><rect x="34.600" y="6" width="2.700" height="2.700" fill="#23281a"/><rect x="33.500" y="15" width="2.700" height="2.700" fill="#23281a"/><path d="M-3.500 2l1.500-1.800 1.500 1.800z" fill="#23281a"/><path d="M73 0.500h2v3" stroke="#5a6830" stroke-width="0.700" fill="none"/></g><rect x="1656.0" y="411.1" width="114.800" height="63" rx="4" fill="#2b2b2d"/><rect x="1659.4" y="414.6" width="108" height="56" rx="3" fill="none" stroke="#3a3a3c" stroke-width="2"/><rect x="1671.5" y="426.2" width="83.700" height="32.300" fill="#a5b947"/><g transform="translate(1678.3,431.3)"><path d="M3.2 0h10.800l-2.600 22.500h-10.800zM1.9 11.200h10.800" fill="none" stroke="#23281a" stroke-width="2.300"/><rect x="-4.0" y="21" width="2.500" height="2.500" fill="#23281a"/><path d="M21.5 0h10.800l-2.600 22.500h-10.800zM20.2 11.200h10.800" fill="none" stroke="#23281a" stroke-width="2.300"/><rect x="14.3" y="21" width="2.500" height="2.500" fill="#23281a"/><path d="M42.8 0h10.800l-2.600 22.500h-10.800zM41.5 11.200h10.800" fill="none" stroke="#23281a" stroke-width="2.300"/><rect x="35.6" y="21" width="2.500" height="2.500" fill="#23281a"/><path d="M61.1 0h10.800l-2.600 22.500h-10.800zM59.8 11.200h10.800" fill="none" stroke="#23281a" stroke-width="2.300"/><rect x="53.9" y="21" width="2.500" height="2.500" fill="#23281a"/><rect x="34.600" y="6" width="2.700" height="2.700" fill="#23281a"/><rect x="33.500" y="15" width="2.700" height="2.700" fill="#23281a"/><path d="M-3.500 2l1.500-1.800 1.500 1.800z" fill="#23281a"/><path d="M73 0.500h2v3" stroke="#5a6830" stroke-width="0.700" fill="none"/></g><path d="M1806.3 404.5l78-1v78.500h-77.300z" fill="#2a2626"/><rect x="1809.9" y="407.8" width="70.500" height="70.500" fill="#f6f6f8"/><rect x="1816.1" y="413.0" width="59" height="58.500" fill="url(#metg)"/><path d="M1809.9 407.8l6 5.500M1880.3 407.8l-5.500 5.500" stroke="#e0e0e6" stroke-width="0.800"/><path d="M1819.8 448.0q4-22 26-27" fill="none" stroke="#55555c" stroke-width="0.900" stroke-dasharray="1.200 1.600"/><path d="M1833.3 426.0q5-8 12-4" fill="none" stroke="#404048" stroke-width="1"/><path d="M1851.3 419.0l6-1.200M1858.3 422.0l5 3" stroke="#d84a5a" stroke-width="0.800"/><text x="1821.3" y="423.5" font-family="Liberation Sans, sans-serif" font-size="6" font-weight="bold" fill="#303036">A</text><text x="1847.8" y="446.5" font-family="Liberation Sans, sans-serif" font-size="5.500" font-weight="bold" fill="#303036">9A</text><text x="1817.8" y="467.5" font-family="Liberation Sans, sans-serif" font-size="5.500" font-weight="bold" fill="#55555c">C E</text><text x="1844.8" y="429.5" font-family="Liberation Sans, sans-serif" font-size="3.600" fill="#404048">20</text><text x="1837.8" y="435.0" font-family="Liberation Sans, sans-serif" font-size="3.600" fill="#404048">10</text><text x="1830.3" y="443.5" font-family="Liberation Sans, sans-serif" font-size="3.600" fill="#404048">5</text><path d="M1819.3 452.5h4M1821.3 457.5h4" stroke="#404048" stroke-width="0.800"/><path d="M1848.3 464.5a19 19 0 0 1 19-19.500l6 0v32.500h-33.500z" fill="#f8f8fa"/><circle cx="1866.8" cy="464.0" r="4" fill="#1c1c1e"/><path d="M1823.8 446.5L1851.8 454.0" stroke="#4a3a36" stroke-width="1.400"/><circle cx="1450.0" cy="574.9" r="37.600" fill="url(#ringg)"/><circle cx="1450.0" cy="574.9" r="33.600" fill="none" stroke="#dcdce6" stroke-width="1.400"/><circle cx="1450.0" cy="574.9" r="31.300" fill="#a4a4b4"/><circle cx="1450.0" cy="574.9" r="29.700" fill="#00ff00"/><circle cx="1576.0" cy="576.4" r="28.700" fill="#161616"/><circle cx="1574.4" cy="577.6" r="28.200" fill="url(#pilg)"/><ellipse cx="1572.8" cy="578.6" rx="23.500" ry="24" fill="#e4e4e8"/><ellipse cx="1573.0" cy="578.9" rx="20.800" ry="21.200" fill="#00ff00"/><circle cx="1713.8" cy="574.9" r="37.600" fill="url(#ringg)"/><circle cx="1713.8" cy="574.9" r="33.600" fill="none" stroke="#dcdce6" stroke-width="1.400"/><circle cx="1713.8" cy="574.9" r="31.300" fill="#a4a4b4"/><circle cx="1713.8" cy="574.9" r="29.700" fill="#ffffff"/><circle cx="1839.8" cy="576.4" r="28.700" fill="#161616"/><circle cx="1838.2" cy="577.6" r="28.200" fill="url(#pilg)"/><ellipse cx="1836.6" cy="578.6" rx="23.500" ry="24" fill="#e4e4e8"/><ellipse cx="1836.8" cy="578.9" rx="20.800" ry="21.200" fill="#ff0000"/><circle cx="1450.0" cy="706.9" r="37.600" fill="url(#ringg)"/><circle cx="1450.0" cy="706.9" r="33.600" fill="none" stroke="#dcdce6" stroke-width="1.400"/><circle cx="1450.0" cy="706.9" r="31.300" fill="#a4a4b4"/><circle cx="1450.0" cy="706.9" r="29.700" fill="#ffff00"/><circle cx="1576.0" cy="708.4" r="28.700" fill="#161616"/><circle cx="1574.4" cy="709.6" r="28.200" fill="url(#pilg)"/><ellipse cx="1572.8" cy="710.6" rx="23.500" ry="24" fill="#e4e4e8"/><ellipse cx="1573.0" cy="710.9" rx="20.800" ry="21.200" fill="#ffff00"/><circle cx="1713.8" cy="706.9" r="37.600" fill="url(#ringg)"/><circle cx="1713.8" cy="706.9" r="33.600" fill="none" stroke="#dcdce6" stroke-width="1.400"/><circle cx="1713.8" cy="706.9" r="31.300" fill="#a4a4b4"/><circle cx="1713.8" cy="706.9" r="29.700" fill="#ffffff"/><circle cx="1839.8" cy="708.4" r="28.700" fill="#161616"/><circle cx="1838.2" cy="709.6" r="28.200" fill="url(#pilg)"/><ellipse cx="1836.6" cy="710.6" rx="23.500" ry="24" fill="#e4e4e8"/><ellipse cx="1836.8" cy="710.9" rx="20.800" ry="21.200" fill="#0000ff"/><circle cx="1450.0" cy="838.9" r="37.600" fill="url(#ringg)"/><circle cx="1450.0" cy="838.9" r="33.600" fill="none" stroke="#dcdce6" stroke-width="1.400"/><circle cx="1450.0" cy="838.9" r="31.300" fill="#a4a4b4"/><circle cx="1450.0" cy="838.9" r="29.700" fill="#ffffff"/><circle cx="1582.0" cy="838.9" r="37.600" fill="url(#ringg)"/><circle cx="1582.0" cy="838.9" r="33.600" fill="none" stroke="#dcdce6" stroke-width="1.400"/><circle cx="1582.0" cy="838.9" r="31.300" fill="#a4a4b4"/><circle cx="1582.0" cy="838.9" r="29.700" fill="#ffff00"/><circle cx="1714.2" cy="837.1" r="22.300" fill="#e4e4e4"/><circle cx="1714.2" cy="837.1" r="21.500" fill="url(#selg)"/><path d="M1708.2 818.1q6-2.500 12 0l-0.800 45q-5 3-10.400 0z" fill="#0e0e10"/><rect x="1712.2" y="819.6" width="4" height="28" fill="url(#selw)"/><ellipse cx="1845.400" cy="838.600" rx="38.500" ry="38.800" fill="url(#blkg)"/><circle cx="1845.400" cy="840" r="14" fill="none" stroke="#1f2023" stroke-width="0.800"/></svg>
<div class="t" style="left:1415.2px;top:370.1px;font-size:10.6px;line-height:16px;color:#000;letter-spacing:-0.385px;">EMERGÊNCIA</div>
<div class="t" style="left:1442.6px;top:481.9px;font-size:10.9px;line-height:16px;color:#000;letter-spacing:-0.164px;font-weight:bold;">S3</div>
<div class="t" style="left:1574.5px;top:481.9px;font-size:10.9px;line-height:16px;color:#000;letter-spacing:-0.164px;font-weight:bold;">P1</div>
<div class="t" style="left:1706.5px;top:481.9px;font-size:10.9px;line-height:16px;color:#000;letter-spacing:-0.164px;font-weight:bold;">P2</div>
<div class="t" style="left:1838.6px;top:481.9px;font-size:10.9px;line-height:16px;color:#000;letter-spacing:-0.164px;font-weight:bold;">P3</div>
<div class="t" style="left:1405.9px;top:501.6px;font-size:10.9px;line-height:16px;color:#000;letter-spacing:-0.180px;">INÍCIO DO CICLO</div>
<div class="t" style="left:1439.6px;top:613.4px;font-size:10.9px;line-height:16px;color:#000;letter-spacing:-0.164px;font-weight:bold;">S19</div>
<div class="t" style="left:1574.2px;top:613.4px;font-size:10.9px;line-height:16px;color:#000;letter-spacing:-0.164px;font-weight:bold;">H2</div>
<div class="t" style="left:1676.7px;top:501.6px;font-size:10.9px;line-height:16px;color:#000;letter-spacing:-0.162px;">FIM DO CICLO</div>
<div class="t" style="left:1703.5px;top:613.4px;font-size:10.9px;line-height:16px;color:#000;letter-spacing:-0.164px;font-weight:bold;">S20</div>
<div class="t" style="left:1838.3px;top:613.4px;font-size:10.9px;line-height:16px;color:#000;letter-spacing:-0.164px;font-weight:bold;">H3</div>
<div class="t" style="left:1402.8px;top:633.7px;font-size:10.9px;line-height:16px;color:#000;letter-spacing:-0.393px;">ROTAÇÃO DIREITA</div>
<div class="t" style="left:1439.6px;top:745.5px;font-size:10.9px;line-height:16px;color:#000;letter-spacing:-0.164px;font-weight:bold;">S34</div>
<div class="t" style="left:1574.2px;top:745.5px;font-size:10.9px;line-height:16px;color:#000;letter-spacing:-0.164px;font-weight:bold;">H4</div>
<div class="t" style="left:1653.1px;top:633.7px;font-size:10.9px;line-height:16px;color:#000;letter-spacing:-0.447px;">ROTAÇÃO À ESQUERDA</div>
<div class="t" style="left:1703.5px;top:745.5px;font-size:10.9px;line-height:16px;color:#000;letter-spacing:-0.164px;font-weight:bold;">S35</div>
<div class="t" style="left:1838.3px;top:745.5px;font-size:10.9px;line-height:16px;color:#000;letter-spacing:-0.164px;font-weight:bold;">H5</div>
<div class="t" style="left:1434.2px;top:765.9px;font-size:10.1px;line-height:16px;color:#000;letter-spacing:-0.918px;">RESET</div>
<div class="t" style="left:1442.6px;top:877.7px;font-size:10.9px;line-height:16px;color:#000;letter-spacing:-0.164px;font-weight:bold;">S5</div>
<div class="t" style="left:1539.3px;top:765.9px;font-size:10.9px;line-height:16px;color:#000;letter-spacing:-0.386px;">EJETOR DA MÃO</div>
<div class="t" style="left:1571.5px;top:877.7px;font-size:10.9px;line-height:16px;color:#000;letter-spacing:-0.164px;font-weight:bold;">S33</div>
<div class="t" style="left:1683.1px;top:765.9px;font-size:10.8px;line-height:16px;color:#000;letter-spacing:-0.452px;">ASPIRADOR</div>
<div class="t" style="left:1703.5px;top:877.7px;font-size:10.9px;line-height:16px;color:#000;letter-spacing:-0.164px;font-weight:bold;">S36</div>
<div class="b" style="left:0px;top:993px;width:1920px;height:35px;background:#222933;"></div>
<svg class="b" style="left:19.5px;top:1001px;" width="21" height="15" viewBox="0 0 21 15"><path d="M0 1.200h20.500M0 7.500h20.500M0 13.800h20.500" stroke="#e8e8e8" stroke-width="2.200"/></svg>
<svg class="b" style="left:48px;top:993px;" width="94" height="30" viewBox="0 0 94 30"><path d="M3.400 30L14.600 0H89.400L78 30z" fill="#3b4453"/></svg>
<div class="t" style="left:72.5px;top:999.3px;font-size:14.47px;line-height:21px;color:#fff;letter-spacing:0.425px;font-weight:bold;">Model</div>
<div class="t" style="left:146.0px;top:999.3px;font-size:14.47px;line-height:21px;color:#f0f0f0;letter-spacing:-0.015px;">Layout1</div>
<svg class="b" style="left:208px;top:999px;" width="10" height="20" viewBox="0 0 10 20"><path d="M8.500 0.500L1.500 19.5" stroke="#555e6d" stroke-width="1.200"/></svg>
<div class="t" style="left:228.0px;top:999.3px;font-size:14.47px;line-height:21px;color:#f0f0f0;letter-spacing:0.051px;">Layout2</div>
<svg class="b" style="left:290px;top:999px;" width="10" height="20" viewBox="0 0 10 20"><path d="M8.500 0.500L1.500 19.5" stroke="#555e6d" stroke-width="1.200"/></svg>
<svg class="b" style="left:313px;top:1000px;" width="18" height="18" viewBox="0 0 18 18"><path d="M9 0v18M0 9h18" stroke="#f0f0f0" stroke-width="2"/></svg>
<svg class="b" style="left:343px;top:999px;" width="10" height="20" viewBox="0 0 10 20"><path d="M8.500 0.500L1.500 19.5" stroke="#555e6d" stroke-width="1.200"/></svg>
<div class="b" style="left:1144px;top:995px;width:58.5px;height:30px;background:#3b4453;"></div>
<div class="b" style="left:1206px;top:995px;width:79.79999999999995px;height:30px;background:#3b4453;"></div>
<div class="b" style="left:1289.2px;top:995px;width:211.0999999999999px;height:30px;background:#3b4453;"></div>
<div class="b" style="left:1503.7px;top:995px;width:131.0999999999999px;height:30px;background:#3b4453;"></div>
<div class="b" style="left:1637.4px;top:995px;width:50.0px;height:30px;background:#3b4453;"></div>
<div class="b" style="left:1689.5px;top:995px;width:29.0px;height:30px;background:#3b4453;"></div>
<div class="b" style="left:1721.5px;top:995px;width:88.5px;height:30px;background:#3b4453;"></div>
<div class="b" style="left:1814.2px;top:995px;width:38.5px;height:30px;background:#3b4453;"></div>
<div class="b" style="left:1856px;top:995px;width:30px;height:30px;background:#3b4453;"></div>
<div class="b" style="left:1889px;top:995px;width:29px;height:30px;background:#3b4453;"></div>
<div class="b" style="left:1236.7px;top:995px;width:28.59999999999991px;height:30px;background:#5a8ed0;"></div>
<div class="b" style="left:1289.2px;top:995px;width:28.799999999999955px;height:30px;background:#5a8ed0;"></div>
<div class="b" style="left:1420.4px;top:995px;width:29.0px;height:30px;background:#5a8ed0;"></div>
<div class="b" style="left:1503.7px;top:995px;width:28.59999999999991px;height:30px;background:#5a8ed0;"></div>
<div class="b" style="left:1753.6px;top:995px;width:27.700000000000045px;height:30px;background:#5a8ed0;"></div>
<div class="b" style="left:0;top:-1.2px;width:1920px;height:1028px;">
<div class="t" style="left:1148.3px;top:1001.1px;font-size:14.47px;line-height:21px;color:#f0f0f0;letter-spacing:-0.164px;">MODEL</div>
<svg class="b" style="left:1211px;top:1000.5px;" width="20" height="20" viewBox="0 0 20 20"><path d="M5.500 0v20M10 0v20M14.500 0v20M0 5.500h20M0 10h20M0 14.500h20" stroke="#e0e0e0" stroke-width="1"/></svg>
<svg class="b" style="left:1243px;top:1002.5px;" width="16" height="16" viewBox="0 0 16 16"><rect x="0.0" y="0.0" width="3" height="3" fill="#fff"/><rect x="0.0" y="6.3" width="3" height="3" fill="#fff"/><rect x="0.0" y="12.6" width="3" height="3" fill="#fff"/><rect x="6.3" y="0.0" width="3" height="3" fill="#fff"/><rect x="6.3" y="6.3" width="3" height="3" fill="#fff"/><rect x="6.3" y="12.6" width="3" height="3" fill="#fff"/><rect x="12.6" y="0.0" width="3" height="3" fill="#fff"/><rect x="12.6" y="6.3" width="3" height="3" fill="#fff"/><rect x="12.6" y="12.6" width="3" height="3" fill="#fff"/></svg>
<svg class="b" style="left:1271px;top:1008px;" width="11" height="6" viewBox="0 0 11 6"><path d="M0 0h10.500L5.250 5.500z" fill="#d8d8d8"/></svg>
<svg class="b" style="left:1294px;top:1000px;" width="20" height="20" viewBox="0 0 20 20"><path d="M1.500 0v19h19" stroke="#fff" stroke-width="1.300" fill="none"/><rect x="1.500" y="13" width="6" height="6" fill="none" stroke="#fff" stroke-width="1"/></svg>
<svg class="b" style="left:1323.5px;top:1000px;" width="22" height="20" viewBox="0 0 22 20"><circle cx="9" cy="11" r="8" fill="none" stroke="#e0e0e0" stroke-width="1.200"/><path d="M9 11l9-8.500M9 11h11.500" stroke="#e0e0e0" stroke-width="1.100"/></svg>
<svg class="b" style="left:1354px;top:1008px;" width="11" height="6" viewBox="0 0 11 6"><path d="M0 0h10.500L5.250 5.500z" fill="#d8d8d8"/></svg>
<svg class="b" style="left:1375.5px;top:999px;" width="18" height="22" viewBox="0 0 18 22"><path d="M8.500 1v20" stroke="#30c060" stroke-width="1.100"/><path d="M0.500 2.500l15.500 16" stroke="#d04848" stroke-width="1.100"/><rect x="7" y="8.500" width="3.200" height="3.200" fill="#3b4453" stroke="#e8e8e8" stroke-width="0.900"/></svg>
<svg class="b" style="left:1404px;top:1008px;" width="11" height="6" viewBox="0 0 11 6"><path d="M0 0h10.500L5.250 5.500z" fill="#d8d8d8"/></svg>
<svg class="b" style="left:1424px;top:1001px;" width="22" height="18" viewBox="0 0 22 18"><path d="M1 16.500h20" stroke="#dce6f4" stroke-width="1.600" fill="none"/><path d="M2 16L17 2" stroke="#fff" stroke-width="1.300" fill="none"/><rect x="6.500" y="8" width="3.600" height="3.600" fill="#fff"/></svg>
<svg class="b" style="left:1454.5px;top:999.5px;" width="22" height="22" viewBox="0 0 22 22"><rect x="3.500" y="4.500" width="17" height="16.500" fill="none" stroke="#e0e0e0" stroke-width="1.100"/><rect x="0.700" y="1.700" width="5" height="5" fill="#3b4453" stroke="#e8a060" stroke-width="1.100"/></svg>
<svg class="b" style="left:1484.5px;top:1008px;" width="11" height="6" viewBox="0 0 11 6"><path d="M0 0h10.500L5.250 5.500z" fill="#d8d8d8"/></svg>
<svg class="b" style="left:1506.5px;top:999.5px;" width="24" height="21" viewBox="0 0 24 21"><path d="M1.0 19l7-18.500 7 18.500-7-5.500z" fill="#fff"/><circle cx="19" cy="4" r="3" fill="none" stroke="#fff" stroke-width="1.200"/></svg>
<svg class="b" style="left:1538px;top:999.5px;" width="24" height="21" viewBox="0 0 24 21"><path d="M0.0 19l7-18.500 7 18.500-7-5.500z" fill="#e0e0e0"/><path d="M17 0l-3 5h3l-2.500 4.500" stroke="#e0e0e0" stroke-width="1.300" fill="none"/></svg>
<svg class="b" style="left:1568.5px;top:1000.5px;" width="20" height="21" viewBox="0 0 20 21"><path d="M0.5 19l7-18.500 7 18.500-7-5.500z" fill="#e0e0e0"/></svg>
<div class="t" style="left:1598.5px;top:1000.6px;font-size:13.86px;line-height:22px;color:#ffffff;letter-spacing:-0.500px;text-shadow:0 0 0.5px #fff;">1:1</div>
<svg class="b" style="left:1620.3px;top:1008px;" width="11" height="6" viewBox="0 0 11 6"><path d="M0 0h10.500L5.250 5.500z" fill="#d8d8d8"/></svg>
<svg class="b" style="left:1642.5px;top:999.5px;" width="22" height="22" viewBox="0 0 22 22"><g transform="translate(11,11)"><rect x="-2.200" y="-10.800" width="4.400" height="6" fill="#e0e0e0" transform="rotate(0)"/><rect x="-2.200" y="-10.800" width="4.400" height="6" fill="#e0e0e0" transform="rotate(45)"/><rect x="-2.200" y="-10.800" width="4.400" height="6" fill="#e0e0e0" transform="rotate(90)"/><rect x="-2.200" y="-10.800" width="4.400" height="6" fill="#e0e0e0" transform="rotate(135)"/><rect x="-2.200" y="-10.800" width="4.400" height="6" fill="#e0e0e0" transform="rotate(180)"/><rect x="-2.200" y="-10.800" width="4.400" height="6" fill="#e0e0e0" transform="rotate(225)"/><rect x="-2.200" y="-10.800" width="4.400" height="6" fill="#e0e0e0" transform="rotate(270)"/><rect x="-2.200" y="-10.800" width="4.400" height="6" fill="#e0e0e0" transform="rotate(315)"/><circle r="7.500" fill="#e0e0e0"/><circle r="3.300" fill="#3b4453"/></g></svg>
<svg class="b" style="left:1672.4px;top:1008px;" width="11" height="6" viewBox="0 0 11 6"><path d="M0 0h10.500L5.250 5.500z" fill="#d8d8d8"/></svg>
<svg class="b" style="left:1694.5px;top:1000.5px;" width="20" height="20" viewBox="0 0 20 20"><path d="M10 0v20M0 10h20" stroke="#f0f0f0" stroke-width="2.200"/></svg>
<svg class="b" style="left:1727px;top:1000px;" width="21" height="21" viewBox="0 0 21 21"><rect x="1" y="1" width="7.500" height="7.500" fill="none" stroke="#e0e0e0" stroke-width="1.300"/><circle cx="15.500" cy="11" r="4.700" fill="none" stroke="#e0e0e0" stroke-width="1.300"/><path d="M2.500 20l5-8 5 8z" fill="none" stroke="#e0e0e0" stroke-width="1.300"/></svg>
<svg class="b" style="left:1756px;top:999.5px;" width="23" height="22" viewBox="0 0 23 22"><path d="M0 2h23M2 7.500h19M11.500 2v9M4 11.500h15v6.500h-15zM7 18v3M16 18v3" stroke="#fff" stroke-width="1.600" fill="none"/></svg>
<svg class="b" style="left:1788px;top:1000px;" width="20" height="21" viewBox="0 0 20 21"><path d="M6 0.500c-2.500 1-3.500 3-3.500 5 0 2 1 3 2.500 4v10.500h4v-10.500c1.500-1 2.500-2 2.500-4 0-2-1-4-3.500-5v5h-2z" fill="#d0d0d0"/><path d="M12.500 9h8l-4 4.500z" fill="#d0d0d0"/></svg>
<svg class="b" style="left:1823px;top:998.5px;" width="23" height="24" viewBox="0 0 23 24"><path d="M4 1h9l5 5v15H4z" fill="#6ea0e0"/><path d="M13 1v5h5z" fill="#c8dcf4"/><path d="M1.500 21.500V12l6 2.500 3.500-2 7 4v5z" fill="#f0b428"/><path d="M8 3.500v6M5 6.500h6" stroke="#fff" stroke-width="1.200"/><circle cx="8" cy="6.500" r="1.800" fill="none" stroke="#fff" stroke-width="1"/><path d="M13 19l3 3 5.500-6" stroke="#30c060" stroke-width="2" fill="none"/></svg>
<svg class="b" style="left:1861px;top:1000.5px;" width="21" height="19" viewBox="0 0 21 19"><rect x="0.700" y="0.700" width="19.600" height="17.600" fill="none" stroke="#e0e0e0" stroke-width="1.300"/><path d="M12 4.500h5v5M17 4.500l-4.500 4.500M9 14.500h-5v-5M4 14.500l4.500-4.500" stroke="#e0e0e0" stroke-width="1.200" fill="none"/></svg>
<svg class="b" style="left:1893px;top:1002px;" width="21" height="17" viewBox="0 0 21 17"><path d="M0 1.200h20.500M0 8.200h20.500M0 15.200h20.500" stroke="#f0f0f0" stroke-width="2"/></svg>
</div>
</body></html>
